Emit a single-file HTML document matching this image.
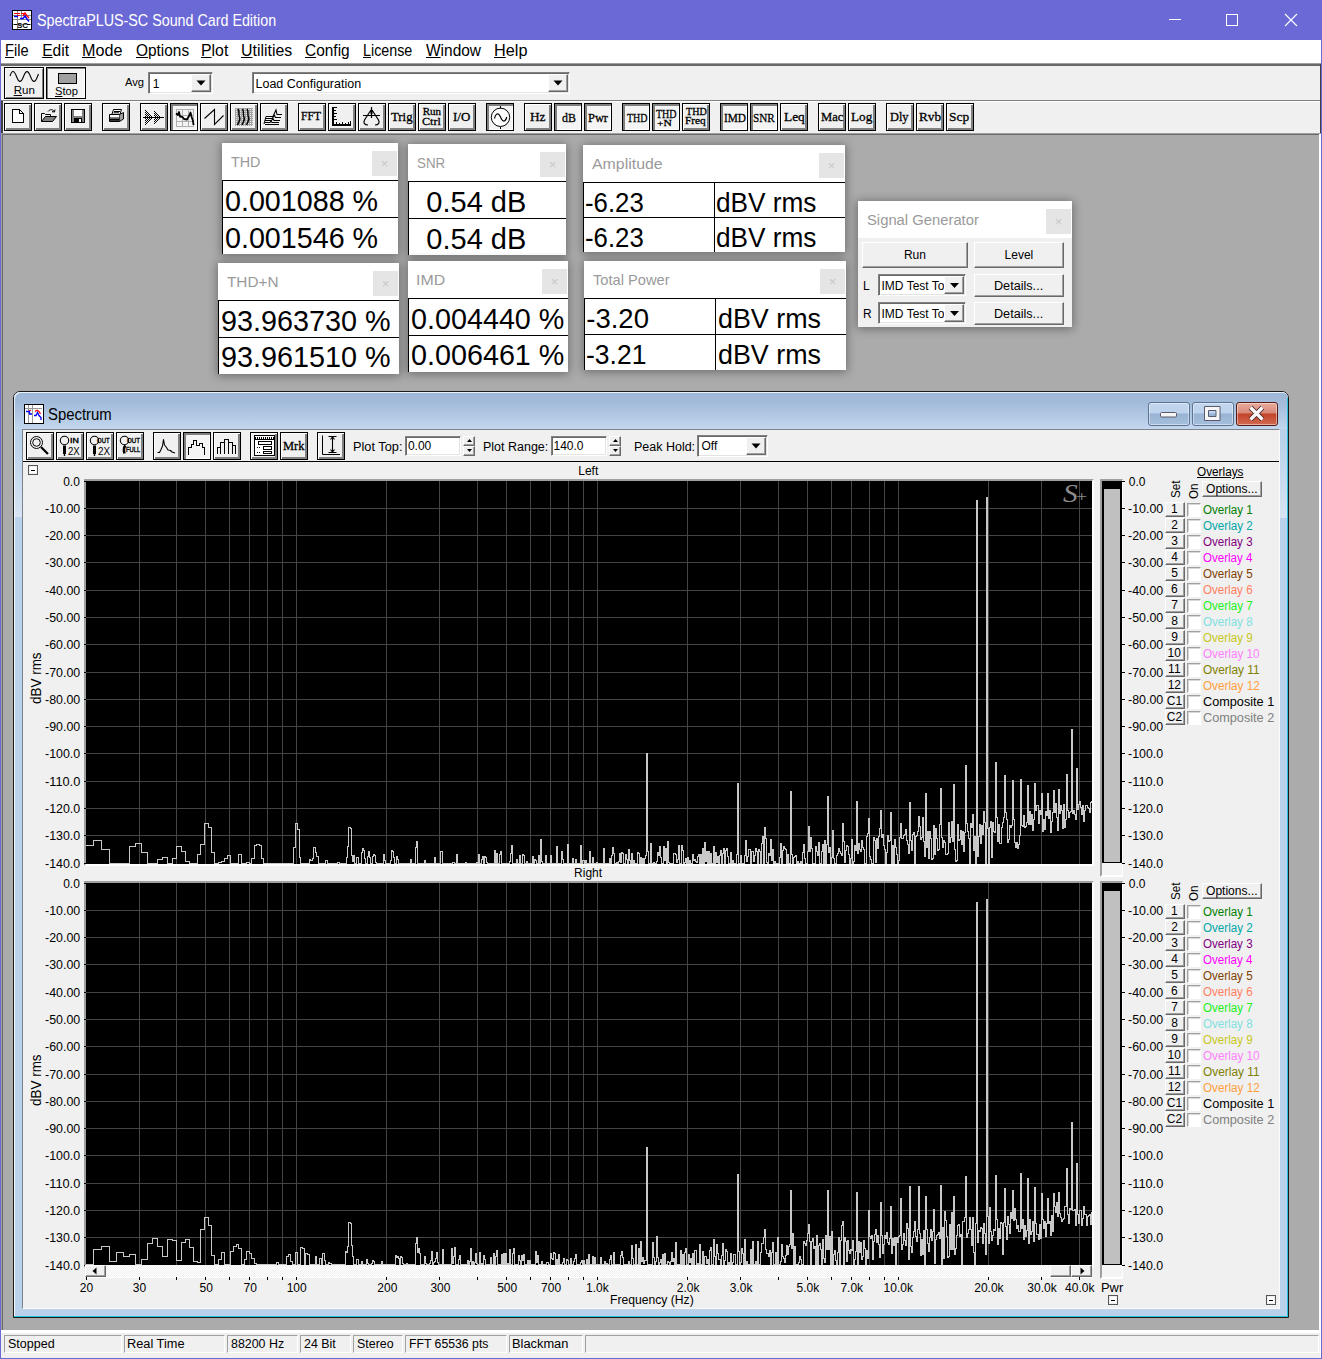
<!DOCTYPE html>
<html><head><meta charset="utf-8"><title>SpectraPLUS-SC Sound Card Edition</title>
<style>
*{box-sizing:border-box;margin:0;padding:0}
html,body{width:1322px;height:1359px;overflow:hidden;background:#ababab}
body{position:relative;font-family:"Liberation Sans",sans-serif}
div,span.t,svg{position:absolute}
span.t{white-space:nowrap;transform-origin:0 0;display:block}
u{text-decoration:underline;text-underline-offset:1px}
.rb{border:1px solid #000;background:#f0f0f0;box-shadow:inset 1px 1px 0 #fff,inset -2px -2px 0 #808080}
.pb{border:1px solid #000;background:#f4f4f4;box-shadow:inset 2px 2px 0 #808080,inset -1px -1px 0 #fff}
.rb2{border:1px solid #000;background:#f0f0f0;box-shadow:inset 1px 1px 0 #fff,inset -1px -1px 0 #808080}
.pb2{border:1px solid #000;background:#f4f4f4;box-shadow:inset 1px 1px 0 #808080,inset -1px -1px 0 #fff}
.sunk{background:#fff;border:1px solid;border-color:#808080 #fff #fff #808080;box-shadow:inset 1px 1px 0 #696969,inset -1px -1px 0 #e3e3e3}
.chk{background:#fff;border:1px solid;border-color:#a0a0a0 #fff #fff #a0a0a0;box-shadow:inset 1px 1px 0 #d8d8d8}
.btn{background:#f0f0f0;border:1px solid;border-color:#fff #696969 #696969 #fff;box-shadow:inset -1px -1px 0 #a0a0a0,inset 1px 1px 0 #f0f0f0}
.pane{border:1px solid;border-color:#a0a0a0 #fff #fff #a0a0a0}
.panel{background:#fff;box-shadow:0 1px 9px 1px rgba(0,0,0,.36)}
.cx{background:#e5e5e5}
</style></head>
<body>
<div style="left:0px;top:0px;width:1322px;height:1359px;background:#6b69d6"></div>
<div style="left:1px;top:40px;width:1320px;height:23px;background:#fff"></div>
<div style="left:1px;top:63px;width:1320px;height:70px;background:#f0f0f0"></div>
<div style="left:1px;top:63px;width:1320px;height:1px;background:#a0a0a0"></div>
<div style="left:1px;top:64px;width:1320px;height:2px;background:#696969"></div>
<div style="left:1px;top:100px;width:1320px;height:1px;background:#808080"></div>
<div style="left:1px;top:101px;width:1320px;height:1px;background:#fff"></div>
<div style="left:1320px;top:64px;width:1px;height:70px;background:#404040"></div>
<div style="left:1px;top:101px;width:2px;height:32px;background:#404040"></div>
<div style="left:1px;top:133px;width:1320px;height:1197px;background:#ababab;border:solid;border-width:1px 2px 0 1px;border-color:#a0a0a0 #fff #fff #a0a0a0;box-shadow:inset 1px 1px 0 #696969"></div>
<div style="left:1px;top:133px;width:1320px;height:1px;background:#a0a0a0"></div>
<div style="left:1px;top:1330px;width:1320px;height:28px;background:#f0f0f0;border-top:3px solid #fff;border-right:1px solid #fff"></div>
<div style="left:0px;top:1358px;width:1322px;height:1px;background:#6b69d6"></div>
<div class="pane" style="left:4px;top:1335px;width:118px;height:18px;"></div>
<span class="t" style="left:7.84px;top:1338px;font-size:12px;line-height:12px;color:#000;transform:scaleX(1.0428);">Stopped</span>
<div class="pane" style="left:124px;top:1335px;width:101px;height:18px;"></div>
<span class="t" style="left:127.18px;top:1338px;font-size:12px;line-height:12px;color:#000;transform:scaleX(1.0654);">Real Time</span>
<div class="pane" style="left:227px;top:1335px;width:71px;height:18px;"></div>
<span class="t" style="left:231.00px;top:1338px;font-size:12px;line-height:12px;color:#000;transform:scaleX(1.0342);">88200 Hz</span>
<div class="pane" style="left:300px;top:1335px;width:51px;height:18px;"></div>
<span class="t" style="left:303.88px;top:1338px;font-size:12px;line-height:12px;color:#000;transform:scaleX(1.0333);">24 Bit</span>
<div class="pane" style="left:353px;top:1335px;width:50px;height:18px;"></div>
<span class="t" style="left:356.84px;top:1338px;font-size:12px;line-height:12px;color:#000;transform:scaleX(1.0344);">Stereo</span>
<div class="pane" style="left:405px;top:1335px;width:102px;height:18px;"></div>
<span class="t" style="left:409.42px;top:1338px;font-size:12px;line-height:12px;color:#000;transform:scaleX(1.0204);">FFT 65536 pts</span>
<div class="pane" style="left:509px;top:1335px;width:74px;height:18px;"></div>
<span class="t" style="left:512.17px;top:1338px;font-size:12px;line-height:12px;color:#000;transform:scaleX(1.0699);">Blackman</span>
<div class="pane" style="left:585px;top:1335px;width:734px;height:18px;"></div>
<span class="t" style="left:36.96px;top:13px;font-size:16px;line-height:16px;color:#fff;transform:scaleX(0.8931);">SpectraPLUS-SC Sound Card Edition</span>
<svg style="left:12px;top:10px" width="20" height="20" viewBox="0 0 20 20" shape-rendering="crispEdges"><rect x="0.5" y="0.5" width="19" height="19" fill="#fff" stroke="#000"/><path d="M1 5.5H19M1 9.5H19M1 14.5H19M5.5 1V19M9.5 1V10" stroke="#888" fill="none"/><path d="M2 3.5H8M5 5.5H8M9 3.5H12" stroke="#f00" stroke-width="1.6" fill="none"/><path d="M11 6L13 3L15 6L17 8" stroke="#f00" stroke-width="1.4" fill="none" shape-rendering="auto"/><path d="M2 6.5H6M8 8.5H11L13 6L15 9L17 11.5" stroke="#00f" stroke-width="1.4" fill="none" shape-rendering="auto"/><text x="5" y="17.5" font-family="Liberation Sans,sans-serif" font-size="8" font-weight="bold" fill="#000" textLength="11">SC</text><path d="M2 14.5H5M15 14.5H18" stroke="#000" fill="none"/></svg>
<svg style="left:1160px;top:8px" width="150" height="26" viewBox="0 0 150 26" fill="none" stroke="#fff" stroke-width="1.1"><path d="M9 11.5H21" shape-rendering="crispEdges"/><rect x="66.5" y="6.5" width="11" height="11" shape-rendering="crispEdges"/><path d="M125 6L137 18M137 6L125 18"/></svg>
<span class="t" style="left:5.23px;top:43px;font-size:15.6px;line-height:15.6px;color:#000;transform:scaleX(0.9379);"><u>F</u>ile</span>
<span class="t" style="left:42.15px;top:43px;font-size:15.6px;line-height:15.6px;color:#000;"><u>E</u>dit</span>
<span class="t" style="left:82.01px;top:43px;font-size:15.6px;line-height:15.6px;color:#000;transform:scaleX(1.0370);"><u>M</u>ode</span>
<span class="t" style="left:135.51px;top:43px;font-size:15.6px;line-height:15.6px;color:#000;transform:scaleX(0.9887);"><u>O</u>ptions</span>
<span class="t" style="left:201.03px;top:43px;font-size:15.6px;line-height:15.6px;color:#000;transform:scaleX(1.0154);"><u>P</u>lot</span>
<span class="t" style="left:241.01px;top:43px;font-size:15.6px;line-height:15.6px;color:#000;transform:scaleX(1.0186);"><u>U</u>tilities</span>
<span class="t" style="left:305.23px;top:43px;font-size:15.6px;line-height:15.6px;color:#000;transform:scaleX(0.9915);"><u>C</u>onfig</span>
<span class="t" style="left:362.86px;top:43px;font-size:15.6px;line-height:15.6px;color:#000;transform:scaleX(0.9158);"><u>L</u>icense</span>
<span class="t" style="left:425.92px;top:43px;font-size:15.6px;line-height:15.6px;color:#000;transform:scaleX(0.9917);"><u>W</u>indow</span>
<span class="t" style="left:493.70px;top:43px;font-size:15.6px;line-height:15.6px;color:#000;transform:scaleX(1.0435);"><u>H</u>elp</span>
<div class="rb2" style="left:4px;top:67px;width:40px;height:32px;"></div>
<svg style="left:4px;top:67px" width="40" height="33" viewBox="0 0 40 33" fill="none" stroke="#000" stroke-width="1.1"><path d="M6 9C8 3 10 3 12.5 9.5S17 16 19.5 9.5S24 3 26.500 9.5S31 16 33.500 9.5L34.500 7"/></svg>
<span class="t" style="left:13.68px;top:85px;font-size:11.5px;line-height:11.5px;color:#000;"><u>R</u>un</span>
<div class="pb2" style="left:46px;top:67px;width:40px;height:32px;"></div>
<div style="left:58px;top:73px;width:19px;height:11px;background:#a0a0a0;border:1px solid #000"></div>
<span class="t" style="left:54.80px;top:86px;font-size:11.5px;line-height:11.5px;color:#000;transform:scaleX(0.9711);"><u>S</u>top</span>
<span class="t" style="left:125.00px;top:77px;font-size:11.5px;line-height:11.5px;color:#000;transform:scaleX(0.9726);">Avg</span>
<div class="sunk" style="left:148px;top:72px;width:65px;height:22px;"></div>
<div class="btn" style="left:191px;top:74px;width:20px;height:18px;"></div>
<svg style="left:196.0px;top:80.0px" width="10" height="6" viewBox="0 0 10 6"><path d="M0.5 0.5H9.5L5 5.5Z" fill="#000"/></svg>
<span class="t" style="left:152.70px;top:78px;font-size:12px;line-height:12px;color:#000;">1</span>
<div class="sunk" style="left:252px;top:72px;width:318px;height:22px;"></div>
<div class="btn" style="left:548px;top:74px;width:20px;height:18px;"></div>
<svg style="left:553.0px;top:80.0px" width="10" height="6" viewBox="0 0 10 6"><path d="M0.5 0.5H9.5L5 5.5Z" fill="#000"/></svg>
<span class="t" style="left:255.50px;top:78px;font-size:12.5px;line-height:12.5px;color:#000;">Load Configuration</span>
<div class="rb" style="left:4px;top:103px;width:28px;height:28px;"></div>
<div class="rb" style="left:34px;top:103px;width:28px;height:28px;"></div>
<div class="rb" style="left:64px;top:103px;width:28px;height:28px;"></div>
<div class="rb" style="left:102px;top:103px;width:28px;height:28px;"></div>
<div class="rb" style="left:140px;top:103px;width:28px;height:28px;"></div>
<div class="rb" style="left:200px;top:103px;width:28px;height:28px;"></div>
<div class="rb" style="left:230px;top:103px;width:28px;height:28px;"></div>
<div class="rb" style="left:260px;top:103px;width:28px;height:28px;"></div>
<div class="rb" style="left:298px;top:103px;width:28px;height:28px;"></div>
<div class="rb" style="left:328px;top:103px;width:28px;height:28px;"></div>
<div class="rb" style="left:358px;top:103px;width:28px;height:28px;"></div>
<div class="rb" style="left:388px;top:103px;width:28px;height:28px;"></div>
<div class="rb" style="left:418px;top:103px;width:28px;height:28px;"></div>
<div class="rb" style="left:448px;top:103px;width:28px;height:28px;"></div>
<div class="rb" style="left:524px;top:103px;width:28px;height:28px;"></div>
<div class="rb" style="left:682px;top:103px;width:28px;height:28px;"></div>
<div class="rb" style="left:780px;top:103px;width:28px;height:28px;"></div>
<div class="rb" style="left:818px;top:103px;width:28px;height:28px;"></div>
<div class="rb" style="left:848px;top:103px;width:28px;height:28px;"></div>
<div class="rb" style="left:886px;top:103px;width:28px;height:28px;"></div>
<div class="rb" style="left:916px;top:103px;width:28px;height:28px;"></div>
<div class="rb" style="left:946px;top:103px;width:28px;height:28px;"></div>
<div class="pb" style="left:170px;top:103px;width:28px;height:28px;"></div>
<div class="pb" style="left:486px;top:103px;width:28px;height:28px;"></div>
<div class="pb" style="left:554px;top:103px;width:28px;height:28px;"></div>
<div class="pb" style="left:584px;top:103px;width:28px;height:28px;"></div>
<div class="pb" style="left:622px;top:103px;width:28px;height:28px;"></div>
<div class="pb" style="left:652px;top:103px;width:28px;height:28px;"></div>
<div class="pb" style="left:720px;top:103px;width:28px;height:28px;"></div>
<div class="pb" style="left:750px;top:103px;width:28px;height:28px;"></div>
<svg style="left:4px;top:103px" width="28" height="28" viewBox="0 0 28 28" fill="none" stroke="#000" stroke-width="1" shape-rendering="crispEdges"><path d="M8.5 6.5H15.5L19.5 10.5V19.5H8.5Z" fill="#fff"/><path d="M15.5 6.5V10.5H19.5"/></svg>
<svg style="left:34px;top:103px" width="28" height="28" viewBox="0 0 28 28" fill="none" stroke="#000" stroke-width="1" ><path d="M7.5 18.5V10.5H10.5L11.5 11.5H16.5V13.5" /><path d="M7.5 18.5L11.5 13.5H22.5L18.5 18.5Z" fill="#808080"/><path d="M14 8.5C16 6 19 6 20.5 9M20.5 9L21 6.5M20.5 9L18 8.7"/></svg>
<svg style="left:64px;top:103px" width="28" height="28" viewBox="0 0 28 28" fill="none" stroke="#000" stroke-width="1" shape-rendering="crispEdges"><rect x="7.5" y="6.5" width="13" height="13" fill="#808080"/><rect x="9.5" y="6.5" width="8" height="6" fill="#fff" stroke="none"/><rect x="10" y="15" width="8" height="4.5" fill="#000" stroke="none"/><rect x="15" y="16" width="2" height="3" fill="#fff" stroke="none"/></svg>
<svg style="left:102px;top:103px" width="28" height="28" viewBox="0 0 28 28" fill="none" stroke="#000" stroke-width="1" ><path d="M10 11L11.5 6.5H19.5L18 11" fill="#fff"/><path d="M7.5 11.5H17.5V18.5H7.5Z" fill="#fff"/><path d="M17.5 11.5L21.5 9.5V16L17.5 18.5" fill="#a0a0a0"/><path d="M7.5 15H17.5M12 8.5H18M11.5 9.8H17"/><path d="M7.5 16.8H17.5" stroke-width="2"/></svg>
<svg style="left:140px;top:103px" width="28" height="28" viewBox="0 0 28 28" fill="none" stroke="#000" stroke-width="1" shape-rendering="crispEdges"><path d="M5 7.5h1M6 8.5h1M5 9.5h1M7 9.5h1M6 10.5h1M8 10.5h1M5 11.5h1M7 11.5h1M9 11.5h1M6 12.5h1M8 12.5h1M10 12.5h1M5 13.5h1M7 13.5h1M9 13.5h1M11 13.5h1M6 14.5h1M8 14.5h1M10 14.5h1M12 14.5h1M5 15.5h1M7 15.5h1M9 15.5h1M11 15.5h1M6 16.5h1M8 16.5h1M10 16.5h1M5 17.5h1M7 17.5h1M9 17.5h1M6 18.5h1M8 18.5h1M5 19.5h1M7 19.5h1M6 20.5h1M5 21.5h1M14 8.5h1M15 9.5h1M14 10.5h1M16 10.5h1M15 11.5h1M17 11.5h1M14 12.5h1M16 12.5h1M18 12.5h1M15 13.5h1M17 13.5h1M19 13.5h1M14 14.5h1M16 14.5h1M18 14.5h1M20 14.5h1M15 15.5h1M17 15.5h1M19 15.5h1M14 16.5h1M16 16.5h1M18 16.5h1M15 17.5h1M17 17.5h1M14 18.5h1M16 18.5h1M15 19.5h1M14 20.5h1"/><path d="M3 14.5H24"/></svg>
<svg style="left:170px;top:103px" width="28" height="28" viewBox="0 0 28 28" fill="none" stroke="#000" stroke-width="1" ><g shape-rendering="crispEdges" stroke="#b0b0b0"><rect x="6.5" y="6.5" width="17" height="17"/><path d="M12.5 6.5V23.5M18.5 6.5V23.5M6.5 12.5H23.5M6.5 18.5H23.5"/></g><path d="M6 10.5L8 12L9 9L10 13.5L12.5 14L14 16L17 16.5L19 13L20.5 9.5L21.5 13.5L23 18L23.5 22" stroke-width="1.8" stroke-linejoin="round"/></svg>
<svg style="left:200px;top:103px" width="28" height="28" viewBox="0 0 28 28" fill="none" stroke="#000" stroke-width="1" ><path d="M4.5 15.5L14.5 6.5V21.5L23.5 12.5" stroke-width="1.1"/></svg>
<svg style="left:230px;top:103px" width="28" height="28" viewBox="0 0 28 28" fill="none" stroke="#000" stroke-width="1" ><rect x="5" y="5" width="18" height="18" fill="#a4a4a4" stroke="none"/><path d="M6 6.5h1M8 6.5h1M10 6.5h1M12 6.5h1M14 6.5h1M16 6.5h1M18 6.5h1M20 6.5h1M22 6.5h1M6 8.5h1M8 8.5h1M10 8.5h1M12 8.5h1M14 8.5h1M16 8.5h1M18 8.5h1M20 8.5h1M22 8.5h1M6 10.5h1M8 10.5h1M10 10.5h1M12 10.5h1M14 10.5h1M16 10.5h1M18 10.5h1M20 10.5h1M22 10.5h1M6 12.5h1M8 12.5h1M10 12.5h1M12 12.5h1M14 12.5h1M16 12.5h1M18 12.5h1M20 12.5h1M22 12.5h1M6 14.5h1M8 14.5h1M10 14.5h1M12 14.5h1M14 14.5h1M16 14.5h1M18 14.5h1M20 14.5h1M22 14.5h1M6 16.5h1M8 16.5h1M10 16.5h1M12 16.5h1M14 16.5h1M16 16.5h1M18 16.5h1M20 16.5h1M22 16.5h1M6 18.5h1M8 18.5h1M10 18.5h1M12 18.5h1M14 18.5h1M16 18.5h1M18 18.5h1M20 18.5h1M22 18.5h1M6 20.5h1M8 20.5h1M10 20.5h1M12 20.5h1M14 20.5h1M16 20.5h1M18 20.5h1M20 20.5h1M22 20.5h1M6 22.5h1M8 22.5h1M10 22.5h1M12 22.5h1M14 22.5h1M16 22.5h1M18 22.5h1M20 22.5h1M22 22.5h1" stroke="#e8e8e8" shape-rendering="crispEdges"/><path d="M8 6C10 9 8 11 9.5 14S8.5 19 7.5 22M12.5 6C14.5 9 12.5 11 14 14S13 19 12 22M17 6C19 9 17 11 18.5 14S17.5 19 16.5 22" stroke-width="1.4"/></svg>
<svg style="left:260px;top:103px" width="28" height="28" viewBox="0 0 28 28" fill="none" stroke="#000" stroke-width="1" ><path d="M6 13.5H13L16 7L17 11.5H22M5 15.5H12L14.5 12.5L15.5 14.5H21M5 17.5H11.5L13 15.5L14 17.5H20M5 19.5H10L11 18L12 19.5H19M5 21.5H19" stroke-width="1.1"/><path d="M6 13.5L4 21" /></svg>
<svg style="left:328px;top:103px" width="28" height="28" viewBox="0 0 28 28" fill="none" stroke="#000" stroke-width="1" shape-rendering="crispEdges"><path d="M5 4V22M4 22H23" stroke-width="2"/><path d="M6 4.500H9M6 7.500H8M6 10.500H9M6 13.500H8M6 16.500H9M8.500 21V19M11.500 21V20M14.500 21V19M17.500 21V20M20.500 21V19M22.500 21V18"/></svg>
<svg style="left:358px;top:103px" width="28" height="28" viewBox="0 0 28 28" fill="none" stroke="#000" stroke-width="1" ><path d="M13.500 4V15M5 12.500H22M13 7L6.500 17C5 20 6.500 22 10 22M14 7L20.500 17C22 20 20.500 22 17 22" stroke-width="1.2"/><path d="M12.500 8h2v3h-2z" fill="#000" stroke="none"/></svg>
<svg style="left:486px;top:103px" width="28" height="28" viewBox="0 0 28 28" fill="none" stroke="#000" stroke-width="1" ><circle cx="14.5" cy="14.3" r="9.2" fill="#fff"/><path d="M14.500 3V5.500M14.500 23.500V26"/><path d="M8.500 15.500C9.500 10.500 12 9.500 13.700 12.500L15.500 16C17 19 19.500 19 20.800 14" stroke-width="1.2"/></svg>
<span class="t" style="left:301.45px;top:110px;font-size:12px;line-height:12px;color:#000;font-family:'Liberation Serif',serif;transform:scaleX(0.9652);-webkit-text-stroke:0.3px #000;">FFT</span>
<span class="t" style="left:390.91px;top:110px;font-size:13px;line-height:13px;color:#000;font-family:'Liberation Serif',serif;transform:scaleX(0.9837);-webkit-text-stroke:0.3px #000;">Trig</span>
<span class="t" style="left:422.67px;top:106px;font-size:11px;line-height:11px;color:#000;font-family:'Liberation Serif',serif;-webkit-text-stroke:0.3px #000;">Run</span>
<span class="t" style="left:422.31px;top:116px;font-size:11px;line-height:11px;color:#000;font-family:'Liberation Serif',serif;transform:scaleX(1.1030);-webkit-text-stroke:0.3px #000;">Ctrl</span>
<span class="t" style="left:453.25px;top:110px;font-size:13px;line-height:13px;color:#000;font-family:'Liberation Serif',serif;transform:scaleX(0.9930);-webkit-text-stroke:0.3px #000;">I/O</span>
<span class="t" style="left:530.40px;top:110px;font-size:13px;line-height:13px;color:#000;font-family:'Liberation Serif',serif;transform:scaleX(1.0233);-webkit-text-stroke:0.3px #000;">Hz</span>
<span class="t" style="left:561.78px;top:111px;font-size:13px;line-height:13px;color:#000;font-family:'Liberation Serif',serif;transform:scaleX(0.9146);-webkit-text-stroke:0.3px #000;">dB</span>
<span class="t" style="left:587.53px;top:111px;font-size:13px;line-height:13px;color:#000;font-family:'Liberation Serif',serif;transform:scaleX(0.9524);-webkit-text-stroke:0.3px #000;">Pwr</span>
<span class="t" style="left:626.95px;top:111px;font-size:13.5px;line-height:13.5px;color:#000;font-family:'Liberation Serif',serif;transform:scaleX(0.7426);-webkit-text-stroke:0.3px #000;">THD</span>
<span class="t" style="left:655.95px;top:107px;font-size:13px;line-height:13px;color:#000;font-family:'Liberation Serif',serif;transform:scaleX(0.7711);-webkit-text-stroke:0.3px #000;">THD</span>
<span class="t" style="left:657.42px;top:119px;font-size:8.8px;line-height:8.8px;color:#000;font-family:'Liberation Serif',serif;transform:scaleX(1.3094);-webkit-text-stroke:0.3px #000;">+N</span>
<span class="t" style="left:685.55px;top:106px;font-size:11.3px;line-height:11.3px;color:#000;font-family:'Liberation Serif',serif;transform:scaleX(0.8916);-webkit-text-stroke:0.3px #000;">THD</span>
<span class="t" style="left:685.36px;top:115px;font-size:10.8px;line-height:10.8px;color:#000;font-family:'Liberation Serif',serif;transform:scaleX(1.0501);-webkit-text-stroke:0.3px #000;">Freq</span>
<span class="t" style="left:723.60px;top:111px;font-size:13.5px;line-height:13.5px;color:#000;font-family:'Liberation Serif',serif;transform:scaleX(0.8398);-webkit-text-stroke:0.3px #000;">IMD</span>
<span class="t" style="left:753.27px;top:111px;font-size:13.5px;line-height:13.5px;color:#000;font-family:'Liberation Serif',serif;transform:scaleX(0.8314);-webkit-text-stroke:0.3px #000;">SNR</span>
<span class="t" style="left:783.60px;top:110px;font-size:13px;line-height:13px;color:#000;font-family:'Liberation Serif',serif;transform:scaleX(1.0290);-webkit-text-stroke:0.3px #000;">Leq</span>
<span class="t" style="left:820.72px;top:110px;font-size:13px;line-height:13px;color:#000;font-family:'Liberation Serif',serif;transform:scaleX(0.9660);-webkit-text-stroke:0.3px #000;">Mac</span>
<span class="t" style="left:851.40px;top:110px;font-size:13px;line-height:13px;color:#000;font-family:'Liberation Serif',serif;transform:scaleX(1.0158);-webkit-text-stroke:0.3px #000;">Log</span>
<span class="t" style="left:890.13px;top:110px;font-size:13px;line-height:13px;color:#000;font-family:'Liberation Serif',serif;transform:scaleX(0.9504);-webkit-text-stroke:0.3px #000;">Dly</span>
<span class="t" style="left:918.80px;top:110px;font-size:13px;line-height:13px;color:#000;font-family:'Liberation Serif',serif;transform:scaleX(1.0192);-webkit-text-stroke:0.3px #000;">Rvb</span>
<span class="t" style="left:948.63px;top:110px;font-size:13px;line-height:13px;color:#000;font-family:'Liberation Serif',serif;transform:scaleX(1.0312);-webkit-text-stroke:0.3px #000;">Scp</span>
<div class="panel" style="left:222px;top:143px;width:176px;height:111px;"></div>
<span class="t" style="left:231.01px;top:154px;font-size:15px;line-height:15px;color:#9a9a9a;transform:scaleX(0.9548);">THD</span>
<div class="cx" style="left:372px;top:151px;width:25px;height:25px;"></div>
<span class="t" style="left:380.70px;top:157px;font-size:13px;line-height:13px;color:#c8c8c8;">×</span>
<div style="left:222px;top:180px;width:176px;height:1px;background:#000"></div>
<div style="left:222px;top:217px;width:176px;height:1px;background:#000"></div>
<div style="left:222px;top:180px;width:1px;height:74px;background:#000"></div>
<span class="t" style="left:224.85px;top:187px;font-size:29px;line-height:29px;color:#000;transform:scaleX(0.9890);">0.001088 %</span>
<span class="t" style="left:224.85px;top:224px;font-size:29px;line-height:29px;color:#000;transform:scaleX(0.9890);">0.001546 %</span>
<div class="panel" style="left:408px;top:144px;width:158px;height:111px;"></div>
<span class="t" style="left:416.90px;top:155px;font-size:15px;line-height:15px;color:#9a9a9a;transform:scaleX(0.8911);">SNR</span>
<div class="cx" style="left:540px;top:152px;width:25px;height:25px;"></div>
<span class="t" style="left:548.70px;top:158px;font-size:13px;line-height:13px;color:#c8c8c8;">×</span>
<div style="left:408px;top:181px;width:158px;height:1px;background:#000"></div>
<div style="left:408px;top:218px;width:158px;height:1px;background:#000"></div>
<div style="left:408px;top:181px;width:1px;height:74px;background:#000"></div>
<span class="t" style="left:426.34px;top:188px;font-size:29px;line-height:29px;color:#000;">0.54 dB</span>
<span class="t" style="left:426.34px;top:225px;font-size:29px;line-height:29px;color:#000;">0.54 dB</span>
<div class="panel" style="left:218px;top:263px;width:181px;height:111px;"></div>
<span class="t" style="left:227.19px;top:274px;font-size:15px;line-height:15px;color:#9a9a9a;transform:scaleX(1.0225);">THD+N</span>
<div class="cx" style="left:373px;top:271px;width:25px;height:25px;"></div>
<span class="t" style="left:381.70px;top:277px;font-size:13px;line-height:13px;color:#c8c8c8;">×</span>
<div style="left:218px;top:300px;width:181px;height:1px;background:#000"></div>
<div style="left:218px;top:337px;width:181px;height:1px;background:#000"></div>
<div style="left:218px;top:300px;width:1px;height:74px;background:#000"></div>
<span class="t" style="left:220.71px;top:307px;font-size:29px;line-height:29px;color:#000;transform:scaleX(0.9921);">93.963730 %</span>
<span class="t" style="left:220.71px;top:343px;font-size:29px;line-height:29px;color:#000;transform:scaleX(0.9921);">93.961510 %</span>
<div class="panel" style="left:408px;top:261px;width:160px;height:111px;"></div>
<span class="t" style="left:416.07px;top:272px;font-size:15px;line-height:15px;color:#9a9a9a;transform:scaleX(1.0619);">IMD</span>
<div class="cx" style="left:542px;top:269px;width:25px;height:25px;"></div>
<span class="t" style="left:550.70px;top:275px;font-size:13px;line-height:13px;color:#c8c8c8;">×</span>
<div style="left:408px;top:298px;width:160px;height:1px;background:#000"></div>
<div style="left:408px;top:335px;width:160px;height:1px;background:#000"></div>
<div style="left:408px;top:298px;width:1px;height:74px;background:#000"></div>
<span class="t" style="left:410.85px;top:305px;font-size:29px;line-height:29px;color:#000;transform:scaleX(0.9909);">0.004440 %</span>
<span class="t" style="left:410.85px;top:341px;font-size:29px;line-height:29px;color:#000;transform:scaleX(0.9909);">0.006461 %</span>
<div class="panel" style="left:583px;top:145px;width:262px;height:107px;"></div>
<span class="t" style="left:592.00px;top:156px;font-size:15px;line-height:15px;color:#9a9a9a;transform:scaleX(1.0594);">Amplitude</span>
<div class="cx" style="left:819px;top:153px;width:25px;height:25px;"></div>
<span class="t" style="left:827.70px;top:159px;font-size:13px;line-height:13px;color:#c8c8c8;">×</span>
<div style="left:583px;top:182px;width:262px;height:1px;background:#000"></div>
<div style="left:583px;top:217px;width:262px;height:1px;background:#000"></div>
<div style="left:583px;top:182px;width:1px;height:70px;background:#000"></div>
<div style="left:714px;top:182px;width:1px;height:70px;background:#000"></div>
<span class="t" style="left:585.24px;top:190px;font-size:27px;line-height:27px;color:#000;transform:scaleX(0.9550);">-6.23</span>
<span class="t" style="left:716.45px;top:190px;font-size:27px;line-height:27px;color:#000;transform:scaleX(0.9703);">dBV rms</span>
<span class="t" style="left:585.24px;top:225px;font-size:27px;line-height:27px;color:#000;transform:scaleX(0.9550);">-6.23</span>
<span class="t" style="left:716.45px;top:225px;font-size:27px;line-height:27px;color:#000;transform:scaleX(0.9703);">dBV rms</span>
<div class="panel" style="left:584px;top:261px;width:262px;height:109px;"></div>
<span class="t" style="left:593.21px;top:272px;font-size:15px;line-height:15px;color:#9a9a9a;transform:scaleX(0.9762);">Total Power</span>
<div class="cx" style="left:820px;top:269px;width:25px;height:25px;"></div>
<span class="t" style="left:828.70px;top:275px;font-size:13px;line-height:13px;color:#c8c8c8;">×</span>
<div style="left:584px;top:298px;width:262px;height:1px;background:#000"></div>
<div style="left:584px;top:334px;width:262px;height:1px;background:#000"></div>
<div style="left:584px;top:298px;width:1px;height:72px;background:#000"></div>
<div style="left:715px;top:298px;width:1px;height:72px;background:#000"></div>
<span class="t" style="left:586.26px;top:305px;font-size:27.5px;line-height:27.5px;color:#000;">-3.20</span>
<span class="t" style="left:717.53px;top:305px;font-size:27.5px;line-height:27.5px;color:#000;transform:scaleX(0.9768);">dBV rms</span>
<span class="t" style="left:586.31px;top:341px;font-size:27.5px;line-height:27.5px;color:#000;transform:scaleX(0.9631);">-3.21</span>
<span class="t" style="left:717.53px;top:341px;font-size:27.5px;line-height:27.5px;color:#000;transform:scaleX(0.9768);">dBV rms</span>
<div class="panel" style="left:858px;top:201px;width:214px;height:126px;background:#f0f0f0"></div>
<div style="left:858px;top:201px;width:214px;height:37px;background:#fff"></div>
<span class="t" style="left:866.53px;top:212px;font-size:15.5px;line-height:15.5px;color:#9a9a9a;transform:scaleX(0.9548);">Signal Generator</span>
<div class="cx" style="left:1046px;top:209px;width:25px;height:25px;"></div>
<span class="t" style="left:1054.70px;top:215px;font-size:13px;line-height:13px;color:#c8c8c8;">×</span>
<div class="btn" style="left:862px;top:242px;width:106px;height:26px;"></div>
<span class="t" style="left:903.90px;top:249px;font-size:12px;line-height:12px;color:#000;">Run</span>
<div class="btn" style="left:974px;top:242px;width:90px;height:26px;"></div>
<span class="t" style="left:1004.57px;top:249px;font-size:12px;line-height:12px;color:#000;">Level</span>
<div class="btn" style="left:974px;top:274px;width:90px;height:23px;"></div>
<span class="t" style="left:994.49px;top:280px;font-size:12px;line-height:12px;color:#000;transform:scaleX(1.0529);">Details...</span>
<div class="btn" style="left:974px;top:302px;width:90px;height:23px;"></div>
<span class="t" style="left:994.49px;top:308px;font-size:12px;line-height:12px;color:#000;transform:scaleX(1.0529);">Details...</span>
<span class="t" style="left:863.04px;top:280px;font-size:12px;line-height:12px;color:#000;">L</span>
<span class="t" style="left:863.04px;top:308px;font-size:12px;line-height:12px;color:#000;">R</span>
<div class="sunk" style="left:878px;top:274px;width:88px;height:22px;overflow:hidden"></div>
<div style="left:880px;top:276px;width:64px;height:18px;overflow:hidden;background:#fff"><span class="t" style="left:1.52px;top:4px;font-size:12px;line-height:12px;color:#000;">IMD Test Tones</span></div>
<div class="btn" style="left:944px;top:276px;width:20px;height:18px;"></div>
<svg style="left:949.5px;top:282.5px" width="9" height="5" viewBox="0 0 9 5"><path d="M0 0H9L4.5 5Z" fill="#000"/></svg>
<div class="sunk" style="left:878px;top:302px;width:88px;height:22px;overflow:hidden"></div>
<div style="left:880px;top:304px;width:64px;height:18px;overflow:hidden;background:#fff"><span class="t" style="left:1.52px;top:4px;font-size:12px;line-height:12px;color:#000;">IMD Test Tones</span></div>
<div class="btn" style="left:944px;top:304px;width:20px;height:18px;"></div>
<svg style="left:949.5px;top:310.5px" width="9" height="5" viewBox="0 0 9 5"><path d="M0 0H9L4.5 5Z" fill="#000"/></svg>
<div style="left:13px;top:391px;width:1276px;height:927px;background:#b9d1ea;border:1px solid #1a1a1a;border-radius:7px 7px 0 0;box-shadow:inset 1px 1px 0 #f4f8fc"></div>
<div style="left:14px;top:392px;width:1274px;height:37px;border-radius:6px 6px 0 0;background:linear-gradient(#9db7d6 0%,#a3bcda 30%,#b4cbe6 70%,#c3d7ef 100%);box-shadow:inset 1px 1px 0 #e8f0f8"></div>
<div style="left:15px;top:440px;width:7px;height:90px;background:linear-gradient(#b9d1ea,#d6e4f3 85%,#b9d1ea 86%)"></div>
<div style="left:1280px;top:440px;width:7px;height:78px;background:linear-gradient(#b9d1ea,#d6e4f3 99%)"></div>
<div style="left:1287px;top:398px;width:1px;height:919px;background:#27c2e0"></div>
<div style="left:14px;top:1316px;width:1274px;height:1px;background:#27c2e0"></div>
<div style="left:22px;top:429px;width:1258px;height:880px;background:#f0f0f0;border:1px solid;border-color:#7c838c #fbfbfb #fbfbfb #7c838c"></div>
<svg style="left:24px;top:404px" width="20" height="20" viewBox="0 0 20 20" shape-rendering="crispEdges"><rect x="0.5" y="0.5" width="19" height="19" fill="#fff" stroke="#000"/><path d="M1 4.5H18M4.5 1V19M8.5 1V19" stroke="#999" fill="none"/><g shape-rendering="auto" fill="none" stroke-width="1.3"><path d="M5 7L7 6M11 7.5L13 6.2L15 7.5L16.5 10" stroke="#f00"/><path d="M2 7.5H5.5V10H8M10 11.5H12L13.5 8.5L15 11.5L17 13.5V16" stroke="#00f"/></g></svg>
<span class="t" style="left:47.63px;top:407px;font-size:16px;line-height:16px;color:#000;transform:scaleX(0.9293);">Spectrum</span>
<div style="left:1148px;top:402px;width:42px;height:24px;border-radius:3px;border:1px solid #5b7394;background:linear-gradient(#c2d6ee 0%,#bdd2ec 45%,#98b3d3 50%,#a5bedc 100%);box-shadow:inset 0 0 0 1px rgba(255,255,255,.45)"></div>
<div style="left:1192px;top:402px;width:42px;height:24px;border-radius:3px;border:1px solid #5b7394;background:linear-gradient(#c2d6ee 0%,#bdd2ec 45%,#98b3d3 50%,#a5bedc 100%);box-shadow:inset 0 0 0 1px rgba(255,255,255,.45)"></div>
<div style="left:1236px;top:402px;width:42px;height:24px;border-radius:3px;border:1px solid #5a1a14;background:linear-gradient(#e8aa9c 0%,#d98a78 45%,#c4432a 50%,#d06a52 100%);box-shadow:inset 0 0 0 1px rgba(255,255,255,.45)"></div>
<svg style="left:1148px;top:402px" width="130" height="24" viewBox="0 0 130 24"><rect x="12.5" y="10.5" width="16" height="4.5" rx="1" fill="#f6f6f6" stroke="#5a5a6e" stroke-width="1"/><path fill-rule="evenodd" d="M56.500 4.500h15.500v14h-15.500zM60.500 8.500h7.500v6h-7.500z" fill="#f6f6f6" stroke="#5a5a6e" stroke-width="1"/><path d="M102.500 5.500L114.500 17.500M114.500 5.500L102.500 17.500" stroke="#4a2020" stroke-width="5.2" fill="none"/><path d="M102.500 5.500L114.500 17.500M114.500 5.500L102.500 17.500" stroke="#f8f8f8" stroke-width="3.4" fill="none"/></svg>
<div style="left:23px;top:461px;width:1256px;height:1px;background:#000"></div>
<div class="rb" style="left:26px;top:432px;width:28px;height:28px;"></div>
<div class="rb" style="left:56px;top:432px;width:28px;height:28px;"></div>
<div class="rb" style="left:86px;top:432px;width:28px;height:28px;"></div>
<div class="rb" style="left:116px;top:432px;width:28px;height:28px;"></div>
<div class="rb" style="left:153px;top:432px;width:28px;height:28px;"></div>
<div class="rb" style="left:213px;top:432px;width:28px;height:28px;"></div>
<div class="rb" style="left:250px;top:432px;width:28px;height:28px;"></div>
<div class="rb" style="left:280px;top:432px;width:28px;height:28px;"></div>
<div class="rb" style="left:317px;top:432px;width:28px;height:28px;"></div>
<div class="pb" style="left:183px;top:432px;width:28px;height:28px;"></div>
<svg style="left:26px;top:432px" width="28" height="28" viewBox="0 0 28 28" fill="none" stroke="#000" stroke-width="1" ><circle cx="10.5" cy="10.5" r="6"/><circle cx="10.5" cy="10.5" r="3.8"/><path d="M15 15L22 22" stroke-width="2.2"/></svg>
<svg style="left:56px;top:432px" width="28" height="28" viewBox="0 0 28 28" fill="none" stroke="#000" stroke-width="1" ><circle cx="8.5" cy="8.5" r="4.2" stroke-width="1.1"/><path d="M8.500 13.500V22" stroke-width="3"/><path d="M8.500 22V24" stroke-width="1.4"/></svg>
<span class="t" style="left:69.91px;top:437px;font-size:7px;line-height:7px;color:#000;transform:scaleX(1.2565);-webkit-text-stroke:0.35px #000;">IN</span>
<span class="t" style="left:67.52px;top:446px;font-size:11.5px;line-height:11.5px;color:#000;transform:scaleX(0.8318);">2X</span>
<svg style="left:86px;top:432px" width="28" height="28" viewBox="0 0 28 28" fill="none" stroke="#000" stroke-width="1" ><circle cx="8.5" cy="8.5" r="4.2" stroke-width="1.1"/><path d="M8.500 13.500V22" stroke-width="3"/><path d="M8.500 22V24" stroke-width="1.4"/></svg>
<span class="t" style="left:97.23px;top:437px;font-size:7px;line-height:7px;color:#000;transform:scaleX(0.8523);-webkit-text-stroke:0.35px #000;">OUT</span>
<span class="t" style="left:97.51px;top:446px;font-size:11.5px;line-height:11.5px;color:#000;transform:scaleX(0.8544);">2X</span>
<svg style="left:116px;top:432px" width="28" height="28" viewBox="0 0 28 28" fill="none" stroke="#000" stroke-width="1" ><circle cx="8.5" cy="8.5" r="4.2" stroke-width="1.1"/><path d="M9.5 13.5C7.5 15.5 7.5 18 8.5 21.5" stroke-width="2.6"/></svg>
<span class="t" style="left:127.12px;top:437px;font-size:7px;line-height:7px;color:#000;transform:scaleX(0.8802);-webkit-text-stroke:0.35px #000;">OUT</span>
<span class="t" style="left:126.13px;top:447px;font-size:6.8px;line-height:6.8px;color:#000;transform:scaleX(0.8565);-webkit-text-stroke:0.35px #000;">FULL</span>
<svg style="left:153px;top:432px" width="28" height="28" viewBox="0 0 28 28" fill="none" stroke="#000" stroke-width="1" ><path d="M4.500 20.500H6.500L8 17.500L9.500 14L10.500 7.500L11.500 13L13.500 15.500L15 18L17.500 18.500L19 20L22 21" stroke-linejoin="round" stroke-width="1.1"/></svg>
<svg style="left:183px;top:432px" width="28" height="28" viewBox="0 0 28 28" fill="none" stroke="#000" stroke-width="1" shape-rendering="crispEdges"><path d="M5.500 23V15.500H8.500V12.500H10.500V8.500H13.500V13.500H16.500V11.500H19.500V15.500H21.500V23" stroke-width="1.2"/></svg>
<svg style="left:213px;top:432px" width="28" height="28" viewBox="0 0 28 28" fill="none" stroke="#000" stroke-width="1" shape-rendering="crispEdges"><path d="M4.500 22V15.500H7.500V22M7.500 15.500V10.500H11.500V22M11.500 10.500V7.500H15.500V22M15.500 10.500H19.500V22M19.500 13.500H22.500V22"/></svg>
<svg style="left:250px;top:432px" width="28" height="28" viewBox="0 0 28 28" fill="none" stroke="#000" stroke-width="1" shape-rendering="crispEdges"><rect x="4.500" y="3.500" width="20" height="20" fill="#fff"/><path d="M5 5.500H24" stroke-width="2" stroke-dasharray="1 1"/><path d="M5 7.500H24"/><rect x="8.500" y="9.500" width="13" height="2.500"/><rect x="13.500" y="14.500" width="8" height="2.500"/><rect x="13.500" y="19" width="8" height="2.500"/><path d="M7 15.500H11M7 20.500H11" stroke-dasharray="1 1"/></svg>
<span class="t" style="left:282.93px;top:439px;font-size:13px;line-height:13px;color:#000;font-family:'Liberation Serif',serif;transform:scaleX(0.9558);-webkit-text-stroke:0.3px #000;">Mrk</span>
<svg style="left:317px;top:432px" width="28" height="28" viewBox="0 0 28 28" fill="none" stroke="#000" stroke-width="1" ><path d="M5.500 3.500V22.500H23"/><path d="M11.500 4.500H19.500M11.500 20.500H19.500M15.500 5V20M13.500 7.500L15.500 5L17.500 7.500M13.500 17.500L15.500 20L17.500 17.500" stroke-width="1.1"/></svg>
<span class="t" style="left:353.28px;top:441px;font-size:12px;line-height:12px;color:#000;transform:scaleX(1.0639);">Plot Top:</span>
<span class="t" style="left:483.30px;top:441px;font-size:12px;line-height:12px;color:#000;transform:scaleX(1.0408);">Plot Range:</span>
<span class="t" style="left:633.50px;top:441px;font-size:12px;line-height:12px;color:#000;transform:scaleX(1.0406);">Peak Hold:</span>
<div class="sunk" style="left:405px;top:436px;width:56px;height:20px;"></div>
<span class="t" style="left:407.92px;top:440px;font-size:12px;line-height:12px;color:#000;">0.00</span>
<div class="btn" style="left:463px;top:436px;width:12px;height:10.0px;"></div>
<div class="btn" style="left:463px;top:446.0px;width:12px;height:10.0px;"></div>
<svg style="left:466.5px;top:439px" width="5" height="3" viewBox="0 0 5 3"><path d="M0 3L2.5 0L5 3Z" fill="#000"/></svg>
<svg style="left:466.5px;top:449.0px" width="5" height="3" viewBox="0 0 5 3"><path d="M0 0L2.5 3L5 0Z" fill="#000"/></svg>
<div class="sunk" style="left:551px;top:436px;width:56px;height:20px;"></div>
<span class="t" style="left:553.50px;top:440px;font-size:12px;line-height:12px;color:#000;">140.0</span>
<div class="btn" style="left:609px;top:436px;width:12px;height:10.0px;"></div>
<div class="btn" style="left:609px;top:446.0px;width:12px;height:10.0px;"></div>
<svg style="left:612.5px;top:439px" width="5" height="3" viewBox="0 0 5 3"><path d="M0 3L2.5 0L5 3Z" fill="#000"/></svg>
<svg style="left:612.5px;top:449.0px" width="5" height="3" viewBox="0 0 5 3"><path d="M0 0L2.5 3L5 0Z" fill="#000"/></svg>
<div class="sunk" style="left:697px;top:435px;width:71px;height:22px;"></div>
<div class="btn" style="left:746px;top:437px;width:20px;height:18px;"></div>
<svg style="left:751.0px;top:443.0px" width="10" height="6" viewBox="0 0 10 6"><path d="M0.5 0.5H9.5L5 5.5Z" fill="#000"/></svg>
<span class="t" style="left:701.46px;top:440px;font-size:12px;line-height:12px;color:#000;">Off</span>
<div style="left:28px;top:465px;width:10px;height:10px;background:#fff;border:1px solid #555;box-shadow:inset 0 0 0 1px #f0f0f0"></div>
<div style="left:31px;top:470px;width:4px;height:1px;background:#000"></div>
<div style="left:1108px;top:1295px;width:10px;height:10px;background:#fff;border:1px solid #555;box-shadow:inset 0 0 0 1px #f0f0f0"></div>
<div style="left:1111px;top:1300px;width:4px;height:1px;background:#000"></div>
<div style="left:1266px;top:1295px;width:10px;height:10px;background:#fff;border:1px solid #555;box-shadow:inset 0 0 0 1px #f0f0f0"></div>
<div style="left:1269px;top:1300px;width:4px;height:1px;background:#000"></div>
<div style="left:84px;top:479px;width:1010px;height:387px;background:#000;border:solid;border-width:2px 2px 2px 2px;border-color:#a0a0a0 #fff #fff #a0a0a0"></div>
<svg style="left:86px;top:481px" width="1006" height="383" viewBox="86 0 1006 383" shape-rendering="crispEdges" fill="none"><path d="M139.5 0V383M176.5 0V383M205.5 0V383M229.5 0V383M249.5 0V383M267.5 0V383M282.5 0V383M296.5 0V383M386.5 0V383M439.5 0V383M477.5 0V383M506.5 0V383M530.5 0V383M550.5 0V383M568.5 0V383M583.5 0V383M597.5 0V383M687.5 0V383M740.5 0V383M778.5 0V383M807.5 0V383M831.5 0V383M851.5 0V383M869.5 0V383M884.5 0V383M898.5 0V383M988.5 0V383M1041.5 0V383M1079.5 0V383M86 27.5H1092M86 54.5H1092M86 81.5H1092M86 109.5H1092M86 136.5H1092M86 163.5H1092M86 191.5H1092M86 218.5H1092M86 245.5H1092M86 272.5H1092M86 300.5H1092M86 327.5H1092M86 354.5H1092" stroke="#444"/><path d="M86.5 364.5H93.5V359.5H101.5V368.5H109.5V382.5H129.5V365.5H135.5V362.5H141.5V371.5H147.5V382.5H157.5V378.5H162.5V376.5H167.5V382.5H172.5V377.5H176.5V365.5H181.5V370.5H185.5V380.5H189.5V382.5H197.5V373.5H200.5V363.5H204.5V342.5H208.5V346.5H211.5V371.5H214.5V382.5H218.5V381.5H221.5V380.5H224.5V377.5H227.5V374.5H230.5V382.5H238.5V373.5H241.5V382.5H246.5V381.5H249.5V382.5H251.5V377.5H254.5V364.5H256.5V363.5H259.5V364.5H261.5V377.5H263.5V382.5H293.5V366.5H295.5V342.5H297.5V348.5H299.5V376.5H300.5V382.5H309.5V378.5H310.5V379.5H312.5V377.5H313.5V366.5H315.5V371.5H316.5V375.5H318.5V382.5H325.5V379.5H327.5V382.5H337.5V381.5H339.5V382.5H346.5V376.5H347.5V365.5H348.5V346.5H350.5V347.5H351.5V374.5H352.5V380.5H353.5V374.5H354.5V382.5H356.5V376.5H358.5V382.5H361.5V371.5H362.5V367.5H363.5V369.5H364.5V377.5H365.5V382.5H367.5V375.5H368.5V370.5H369.5V376.5H370.5V382.5H372.5V375.5H373.5V373.5H374.5V374.5H375.5V381.5H376.5V382.5H383.5V373.5H384.5V379.5H385.5V382.5H390.5V379.5H391.5V369.5H392.5V370.5H393.5V376.5H394.5V382.5H396.5V375.5H397.5V378.5H398.5V382.5H410.5V378.5H411.5V382.5H415.5V366.5H416.5V360.5H417.5V382.5H424.5V379.5H425.5V382.5H434.5V376.5H435.5V382.5H440.5V370.5H442.5V382.5H452.5V381.5H454.5V382.5H456.5V373.5H457.5V382.5H465.5V381.5H466.5V382.5H476.5V381.5H477.5V382.5H478.5V373.5H479.5V382.5H481.5V378.5H482.5V375.5H483.5V382.5H484.5V375.5H485.5V376.5H486.5V381.5H487.5V382.5H494.5V369.5H495.5V382.5H496.5V372.5H497.5V382.5H499.5V373.5H500.5V370.5H501.5V382.5H509.5V380.5H510.5V372.5H511.5V364.5H512.5V382.5H516.5V378.5H517.5V382.5H519.5V374.5H520.5V382.5H522.5V373.5H523.5V374.5H524.5V382.5H526.5V380.5H527.5V382.5H532.5V375.5H533.5V382.5H534.5V378.5H535.5V379.5H536.5V382.5H538.5V374.5H539.5V382.5H540.5V358.5H541.5V380.5H542.5V382.5H545.5V374.5H546.5V382.5H550.5V374.5H551.5V382.5H556.5V365.5H557.5V382.5H561.5V370.5H562.5V378.5H563.5V382.5H567.5V363.5H568.5V382.5H572.5V377.5H573.5V382.5H575.5V378.5H576.5V382.5H580.5V364.5H581.5V382.5H582.5V379.5H584.5V382.5H585.5V379.5H586.5V382.5H589.5V370.5H590.5V382.5H592.5V376.5H593.5V382.5H596.5V381.5H597.5V382.5H603.5V367.5H604.5V382.5H609.5V377.5H610.5V382.5H611.5V374.5H612.5V366.5H613.5V372.5H614.5V382.5H616.5V381.5H617.5V382.5H618.5V380.5H619.5V372.5H620.5V381.5H621.5V371.5H622.5V372.5H623.5V382.5H625.5V373.5H626.5V378.5H627.5V382.5H628.5V368.5H629.5V379.5H630.5V382.5H631.5V372.5H632.5V382.5H633.5V379.5H634.5V382.5H637.5V371.5H638.5V372.5H639.5V382.5H640.5V376.5H641.5V382.5H642.5V377.5H643.5V382.5H644.5V377.5H645.5V374.5H646.5V272.5H647.5V370.5H648.5V382.5H650.5V362.5H651.5V382.5H653.5V381.5H654.5V382.5H656.5V380.5H657.5V371.5H658.5V374.5H659.5V365.5H660.5V376.5H661.5V382.5H663.5V365.5H664.5V379.5H665.5V367.5H666.5V382.5H667.5V360.5H668.5V381.5H669.5V382.5H673.5V372.5H675.5V373.5H676.5V381.5H677.5V378.5H678.5V364.5H679.5V382.5H681.5V364.5H682.5V369.5H683.5V382.5H684.5V381.5H685.5V377.5H686.5V382.5H687.5V376.5H688.5V382.5H689.5V379.5H690.5V382.5H692.5V373.5H693.5V379.5H694.5V378.5H695.5V380.5H696.5V381.5H697.5V375.5H698.5V373.5H699.5V382.5H700.5V373.5H701.5V382.5H702.5V367.5H703.5V382.5H704.5V361.5H705.5V380.5H706.5V370.5H707.5V382.5H708.5V370.5H709.5V382.5H710.5V372.5H711.5V382.5H713.5V365.5H714.5V382.5H715.5V371.5H716.5V381.5H717.5V375.5H718.5V382.5H719.5V374.5H720.5V369.5H721.5V382.5H722.5V372.5H723.5V367.5H724.5V382.5H725.5V369.5H726.5V367.5H727.5V375.5H728.5V382.5H730.5V371.5H731.5V382.5H732.5V379.5H733.5V382.5H736.5V373.5H737.5V302.5H738.5V382.5H740.5V374.5H741.5V382.5H744.5V374.5H745.5V359.5H746.5V380.5H747.5V375.5H748.5V368.5H750.5V382.5H751.5V370.5H753.5V380.5H754.5V374.5H755.5V367.5H756.5V370.5H757.5V382.5H758.5V368.5H759.5V370.5H760.5V382.5H761.5V362.5H762.5V355.5H763.5V382.5H764.5V346.5H765.5V357.5H766.5V381.5H767.5V382.5H768.5V372.5H769.5V374.5H770.5V358.5H771.5V379.5H772.5V368.5H773.5V382.5H774.5V380.5H775.5V382.5H779.5V376.5H780.5V362.5H781.5V382.5H782.5V369.5H783.5V365.5H784.5V367.5H785.5V368.5H786.5V382.5H787.5V373.5H788.5V382.5H790.5V310.5H791.5V373.5H792.5V382.5H793.5V376.5H794.5V375.5H795.5V374.5H796.5V382.5H797.5V380.5H798.5V382.5H800.5V380.5H801.5V382.5H802.5V371.5H803.5V363.5H804.5V377.5H805.5V382.5H807.5V370.5H808.5V345.5H809.5V370.5H810.5V356.5H811.5V367.5H812.5V382.5H815.5V365.5H816.5V370.5H817.5V374.5H818.5V361.5H819.5V382.5H821.5V370.5H822.5V363.5H823.5V382.5H824.5V359.5H825.5V382.5H826.5V363.5H827.5V315.5H828.5V371.5H829.5V366.5H830.5V382.5H831.5V376.5H832.5V349.5H833.5V377.5H834.5V382.5H836.5V374.5H837.5V372.5H838.5V367.5H839.5V370.5H840.5V372.5H841.5V374.5H842.5V342.5H843.5V360.5H844.5V381.5H845.5V369.5H846.5V364.5H847.5V365.5H848.5V373.5H849.5V382.5H850.5V377.5H851.5V358.5H852.5V382.5H853.5V380.5H854.5V364.5H855.5V369.5H856.5V320.5H857.5V372.5H858.5V362.5H859.5V368.5H860.5V370.5H861.5V359.5H862.5V366.5H863.5V368.5H864.5V382.5H866.5V355.5H867.5V352.5H868.5V337.5H869.5V375.5H870.5V378.5H871.5V382.5H873.5V356.5H874.5V359.5H875.5V381.5H876.5V357.5H877.5V367.5H878.5V355.5H879.5V347.5H880.5V329.5H881.5V356.5H882.5V353.5H883.5V364.5H884.5V368.5H885.5V382.5H886.5V371.5H887.5V354.5H888.5V360.5H889.5V359.5H890.5V331.5H891.5V382.5H892.5V364.5H893.5V382.5H894.5V358.5H895.5V366.5H896.5V373.5H897.5V382.5H898.5V379.5H899.5V356.5H900.5V342.5H901.5V357.5H903.5V354.5H904.5V353.5H905.5V348.5H906.5V359.5H907.5V363.5H908.5V372.5H909.5V321.5H910.5V359.5H911.5V369.5H912.5V353.5H913.5V351.5H914.5V382.5H915.5V355.5H916.5V354.5H917.5V350.5H918.5V335.5H919.5V345.5H920.5V358.5H921.5V356.5H922.5V336.5H923.5V360.5H924.5V375.5H925.5V312.5H926.5V366.5H927.5V350.5H928.5V377.5H929.5V350.5H930.5V357.5H931.5V378.5H932.5V377.5H933.5V344.5H934.5V373.5H935.5V347.5H936.5V357.5H937.5V369.5H938.5V368.5H939.5V343.5H940.5V307.5H941.5V356.5H942.5V366.5H943.5V359.5H944.5V361.5H945.5V373.5H947.5V372.5H948.5V341.5H949.5V361.5H950.5V356.5H951.5V340.5H952.5V360.5H953.5V303.5H954.5V368.5H955.5V380.5H956.5V379.5H957.5V343.5H958.5V359.5H959.5V358.5H960.5V349.5H961.5V363.5H962.5V350.5H963.5V370.5H964.5V351.5H965.5V284.5H966.5V342.5H967.5V350.5H968.5V357.5H969.5V382.5H970.5V342.5H971.5V346.5H972.5V333.5H973.5V369.5H974.5V355.5H975.5V382.5H976.5V19.5H977.5V375.5H978.5V355.5H979.5V343.5H980.5V362.5H981.5V344.5H982.5V353.5H983.5V330.5H984.5V341.5H985.5V382.5H986.5V16.5H987.5V347.5H988.5V382.5H989.5V346.5H990.5V340.5H991.5V376.5H992.5V341.5H993.5V350.5H994.5V351.5H995.5V281.5H996.5V336.5H997.5V360.5H998.5V343.5H999.5V362.5H1001.5V346.5H1002.5V341.5H1003.5V336.5H1004.5V294.5H1005.5V331.5H1006.5V338.5H1007.5V361.5H1008.5V358.5H1009.5V344.5H1010.5V346.5H1011.5V344.5H1012.5V299.5H1013.5V338.5H1014.5V361.5H1015.5V366.5H1016.5V361.5H1017.5V367.5H1018.5V363.5H1019.5V354.5H1020.5V298.5H1021.5V344.5H1022.5V345.5H1023.5V334.5H1024.5V346.5H1025.5V345.5H1026.5V341.5H1027.5V304.5H1028.5V343.5H1029.5V330.5H1030.5V343.5H1031.5V333.5H1032.5V349.5H1033.5V338.5H1034.5V302.5H1035.5V329.5H1036.5V324.5H1038.5V342.5H1039.5V329.5H1040.5V333.5H1041.5V312.5H1042.5V350.5H1043.5V338.5H1044.5V348.5H1045.5V330.5H1046.5V334.5H1047.5V312.5H1048.5V337.5H1049.5V329.5H1050.5V351.5H1051.5V340.5H1052.5V331.5H1053.5V309.5H1054.5V331.5H1055.5V322.5H1056.5V336.5H1057.5V349.5H1058.5V308.5H1059.5V332.5H1060.5V324.5H1061.5V329.5H1062.5V347.5H1063.5V323.5H1064.5V346.5H1065.5V338.5H1066.5V293.5H1067.5V329.5H1068.5V336.5H1069.5V331.5H1070.5V330.5H1071.5V248.5H1072.5V332.5H1073.5V329.5H1074.5V333.5H1075.5V338.5H1076.5V287.5H1077.5V328.5H1078.5V323.5H1079.5V320.5H1080.5V326.5H1081.5V333.5H1082.5V324.5H1083.5V340.5H1084.5V329.5H1085.5V324.5H1087.5V326.5H1088.5V327.5H1089.5V331.5H1090.5V321.5H1091.5V320.5H1091.5" stroke="#c8c8c8" stroke-width="1" stroke-linecap="square"/></svg>
<span class="t" style="left:63.14px;top:476px;font-size:12px;line-height:12px;color:#000;">0.0</span>
<span class="t" style="left:1128.82px;top:476px;font-size:12px;line-height:12px;color:#000;">0.0</span>
<div style="left:84px;top:481px;width:2px;height:1px;background:#000"></div>
<span class="t" style="left:44.64px;top:503px;font-size:12px;line-height:12px;color:#000;transform:scaleX(1.0345);">-10.00</span>
<span class="t" style="left:1127.74px;top:503px;font-size:12px;line-height:12px;color:#000;transform:scaleX(1.0345);">-10.00</span>
<div style="left:84px;top:508px;width:2px;height:1px;background:#000"></div>
<span class="t" style="left:44.64px;top:530px;font-size:12px;line-height:12px;color:#000;transform:scaleX(1.0345);">-20.00</span>
<span class="t" style="left:1127.74px;top:530px;font-size:12px;line-height:12px;color:#000;transform:scaleX(1.0345);">-20.00</span>
<div style="left:84px;top:535px;width:2px;height:1px;background:#000"></div>
<span class="t" style="left:44.64px;top:557px;font-size:12px;line-height:12px;color:#000;transform:scaleX(1.0345);">-30.00</span>
<span class="t" style="left:1127.74px;top:557px;font-size:12px;line-height:12px;color:#000;transform:scaleX(1.0345);">-30.00</span>
<div style="left:84px;top:562px;width:2px;height:1px;background:#000"></div>
<span class="t" style="left:44.64px;top:585px;font-size:12px;line-height:12px;color:#000;transform:scaleX(1.0345);">-40.00</span>
<span class="t" style="left:1127.74px;top:585px;font-size:12px;line-height:12px;color:#000;transform:scaleX(1.0345);">-40.00</span>
<div style="left:84px;top:590px;width:2px;height:1px;background:#000"></div>
<span class="t" style="left:44.64px;top:612px;font-size:12px;line-height:12px;color:#000;transform:scaleX(1.0345);">-50.00</span>
<span class="t" style="left:1127.74px;top:612px;font-size:12px;line-height:12px;color:#000;transform:scaleX(1.0345);">-50.00</span>
<div style="left:84px;top:617px;width:2px;height:1px;background:#000"></div>
<span class="t" style="left:44.64px;top:639px;font-size:12px;line-height:12px;color:#000;transform:scaleX(1.0345);">-60.00</span>
<span class="t" style="left:1127.74px;top:639px;font-size:12px;line-height:12px;color:#000;transform:scaleX(1.0345);">-60.00</span>
<div style="left:84px;top:644px;width:2px;height:1px;background:#000"></div>
<span class="t" style="left:44.64px;top:667px;font-size:12px;line-height:12px;color:#000;transform:scaleX(1.0345);">-70.00</span>
<span class="t" style="left:1127.74px;top:667px;font-size:12px;line-height:12px;color:#000;transform:scaleX(1.0345);">-70.00</span>
<div style="left:84px;top:672px;width:2px;height:1px;background:#000"></div>
<span class="t" style="left:44.64px;top:694px;font-size:12px;line-height:12px;color:#000;transform:scaleX(1.0345);">-80.00</span>
<span class="t" style="left:1127.74px;top:694px;font-size:12px;line-height:12px;color:#000;transform:scaleX(1.0345);">-80.00</span>
<div style="left:84px;top:699px;width:2px;height:1px;background:#000"></div>
<span class="t" style="left:44.64px;top:721px;font-size:12px;line-height:12px;color:#000;transform:scaleX(1.0345);">-90.00</span>
<span class="t" style="left:1127.74px;top:721px;font-size:12px;line-height:12px;color:#000;transform:scaleX(1.0345);">-90.00</span>
<div style="left:84px;top:726px;width:2px;height:1px;background:#000"></div>
<span class="t" style="left:44.64px;top:748px;font-size:12px;line-height:12px;color:#000;transform:scaleX(1.0345);">-100.0</span>
<span class="t" style="left:1127.74px;top:748px;font-size:12px;line-height:12px;color:#000;transform:scaleX(1.0345);">-100.0</span>
<div style="left:84px;top:753px;width:2px;height:1px;background:#000"></div>
<span class="t" style="left:44.63px;top:776px;font-size:12px;line-height:12px;color:#000;transform:scaleX(1.0634);">-110.0</span>
<span class="t" style="left:1127.73px;top:776px;font-size:12px;line-height:12px;color:#000;transform:scaleX(1.0634);">-110.0</span>
<div style="left:84px;top:781px;width:2px;height:1px;background:#000"></div>
<span class="t" style="left:44.64px;top:803px;font-size:12px;line-height:12px;color:#000;transform:scaleX(1.0345);">-120.0</span>
<span class="t" style="left:1127.74px;top:803px;font-size:12px;line-height:12px;color:#000;transform:scaleX(1.0345);">-120.0</span>
<div style="left:84px;top:808px;width:2px;height:1px;background:#000"></div>
<span class="t" style="left:44.64px;top:830px;font-size:12px;line-height:12px;color:#000;transform:scaleX(1.0345);">-130.0</span>
<span class="t" style="left:1127.74px;top:830px;font-size:12px;line-height:12px;color:#000;transform:scaleX(1.0345);">-130.0</span>
<div style="left:84px;top:835px;width:2px;height:1px;background:#000"></div>
<span class="t" style="left:44.64px;top:858px;font-size:12px;line-height:12px;color:#000;transform:scaleX(1.0345);">-140.0</span>
<span class="t" style="left:1127.74px;top:858px;font-size:12px;line-height:12px;color:#000;transform:scaleX(1.0345);">-140.0</span>
<div style="left:84px;top:863px;width:2px;height:1px;background:#000"></div>
<div style="left:-3.6px;top:667.9px;width:80px;height:20px;transform:rotate(-90deg);transform-origin:50% 50%;"><span class="t" style="left:14.16px;top:3px;font-size:14.1px;line-height:14.1px;color:#000;transform:scaleX(0.9544);">dBV rms</span></div>
<div style="left:1100px;top:479px;width:23px;height:398px;background:#f4f4f4;border:solid;border-width:2px 1px 2px 2px;border-color:#a0a0a0 #fff #fff #a0a0a0"></div>
<div style="left:1102px;top:481px;width:20px;height:382px;background:#000"></div>
<div style="left:1104px;top:489px;width:16px;height:373px;background:#c0c0c0"></div>
<div style="left:1122px;top:481px;width:3px;height:1px;background:#000"></div>
<div style="left:1122px;top:508px;width:3px;height:1px;background:#000"></div>
<div style="left:1122px;top:535px;width:3px;height:1px;background:#000"></div>
<div style="left:1122px;top:562px;width:3px;height:1px;background:#000"></div>
<div style="left:1122px;top:590px;width:3px;height:1px;background:#000"></div>
<div style="left:1122px;top:617px;width:3px;height:1px;background:#000"></div>
<div style="left:1122px;top:644px;width:3px;height:1px;background:#000"></div>
<div style="left:1122px;top:672px;width:3px;height:1px;background:#000"></div>
<div style="left:1122px;top:699px;width:3px;height:1px;background:#000"></div>
<div style="left:1122px;top:726px;width:3px;height:1px;background:#000"></div>
<div style="left:1122px;top:753px;width:3px;height:1px;background:#000"></div>
<div style="left:1122px;top:781px;width:3px;height:1px;background:#000"></div>
<div style="left:1122px;top:808px;width:3px;height:1px;background:#000"></div>
<div style="left:1122px;top:835px;width:3px;height:1px;background:#000"></div>
<div style="left:1122px;top:863px;width:3px;height:1px;background:#000"></div>
<div style="left:1135.4px;top:479.4px;width:80px;height:20px;transform:rotate(-90deg);transform-origin:50% 50%;"><span class="t" style="left:30.97px;top:5px;font-size:12.6px;line-height:12.6px;color:#000;transform:scaleX(0.9305);">Set</span></div>
<div style="left:1153.2px;top:480.8px;width:80px;height:20px;transform:rotate(-90deg);transform-origin:50% 50%;"><span class="t" style="left:32.38px;top:5px;font-size:12.4px;line-height:12.4px;color:#000;transform:scaleX(0.9348);">On</span></div>
<div class="btn" style="left:1202px;top:481px;width:60px;height:16px;"></div>
<span class="t" style="left:1206.46px;top:483px;font-size:12px;line-height:12px;color:#000;transform:scaleX(1.0052);">Options...</span>
<div class="btn" style="left:1165px;top:502px;width:20px;height:15px;"></div>
<span class="t" style="left:1170.99px;top:503px;font-size:12px;line-height:12px;color:#000;">1</span>
<div class="chk" style="left:1187px;top:503px;width:14px;height:14px;"></div>
<span class="t" style="left:1202.88px;top:504px;font-size:12px;line-height:12px;color:#008000;transform:scaleX(0.9666);">Overlay 1</span>
<div class="btn" style="left:1165px;top:518px;width:20px;height:15px;"></div>
<span class="t" style="left:1171.17px;top:519px;font-size:12px;line-height:12px;color:#000;">2</span>
<div class="chk" style="left:1187px;top:519px;width:14px;height:14px;"></div>
<span class="t" style="left:1202.88px;top:520px;font-size:12px;line-height:12px;color:#00a8a8;transform:scaleX(0.9677);">Overlay 2</span>
<div class="btn" style="left:1165px;top:534px;width:20px;height:15px;"></div>
<span class="t" style="left:1171.17px;top:535px;font-size:12px;line-height:12px;color:#000;">3</span>
<div class="chk" style="left:1187px;top:535px;width:14px;height:14px;"></div>
<span class="t" style="left:1202.88px;top:536px;font-size:12px;line-height:12px;color:#800080;transform:scaleX(0.9654);">Overlay 3</span>
<div class="btn" style="left:1165px;top:550px;width:20px;height:15px;"></div>
<span class="t" style="left:1171.20px;top:551px;font-size:12px;line-height:12px;color:#000;">4</span>
<div class="chk" style="left:1187px;top:551px;width:14px;height:14px;"></div>
<span class="t" style="left:1202.88px;top:552px;font-size:12px;line-height:12px;color:#ff00ff;transform:scaleX(0.9620);">Overlay 4</span>
<div class="btn" style="left:1165px;top:566px;width:20px;height:15px;"></div>
<span class="t" style="left:1171.17px;top:567px;font-size:12px;line-height:12px;color:#000;">5</span>
<div class="chk" style="left:1187px;top:567px;width:14px;height:14px;"></div>
<span class="t" style="left:1202.88px;top:568px;font-size:12px;line-height:12px;color:#804000;transform:scaleX(0.9654);">Overlay 5</span>
<div class="btn" style="left:1165px;top:582px;width:20px;height:15px;"></div>
<span class="t" style="left:1171.11px;top:583px;font-size:12px;line-height:12px;color:#000;">6</span>
<div class="chk" style="left:1187px;top:583px;width:14px;height:14px;"></div>
<span class="t" style="left:1202.88px;top:584px;font-size:12px;line-height:12px;color:#ff8060;transform:scaleX(0.9654);">Overlay 6</span>
<div class="btn" style="left:1165px;top:598px;width:20px;height:15px;"></div>
<span class="t" style="left:1171.17px;top:599px;font-size:12px;line-height:12px;color:#000;">7</span>
<div class="chk" style="left:1187px;top:599px;width:14px;height:14px;"></div>
<span class="t" style="left:1202.88px;top:600px;font-size:12px;line-height:12px;color:#20f020;transform:scaleX(0.9677);">Overlay 7</span>
<div class="btn" style="left:1165px;top:614px;width:20px;height:15px;"></div>
<span class="t" style="left:1171.17px;top:615px;font-size:12px;line-height:12px;color:#000;">8</span>
<div class="chk" style="left:1187px;top:615px;width:14px;height:14px;"></div>
<span class="t" style="left:1202.88px;top:616px;font-size:12px;line-height:12px;color:#80e0e0;transform:scaleX(0.9654);">Overlay 8</span>
<div class="btn" style="left:1165px;top:630px;width:20px;height:15px;"></div>
<span class="t" style="left:1171.17px;top:631px;font-size:12px;line-height:12px;color:#000;">9</span>
<div class="chk" style="left:1187px;top:631px;width:14px;height:14px;"></div>
<span class="t" style="left:1202.88px;top:632px;font-size:12px;line-height:12px;color:#c8c820;transform:scaleX(0.9666);">Overlay 9</span>
<div class="btn" style="left:1165px;top:646px;width:20px;height:15px;"></div>
<span class="t" style="left:1167.60px;top:647px;font-size:12px;line-height:12px;color:#000;">10</span>
<div class="chk" style="left:1187px;top:647px;width:14px;height:14px;"></div>
<span class="t" style="left:1202.87px;top:648px;font-size:12px;line-height:12px;color:#ff80ff;transform:scaleX(0.9744);">Overlay 10</span>
<div class="btn" style="left:1165px;top:662px;width:20px;height:15px;"></div>
<span class="t" style="left:1168.11px;top:663px;font-size:12px;line-height:12px;color:#000;">11</span>
<div class="chk" style="left:1187px;top:663px;width:14px;height:14px;"></div>
<span class="t" style="left:1202.86px;top:664px;font-size:12px;line-height:12px;color:#808000;transform:scaleX(0.9921);">Overlay 11</span>
<div class="btn" style="left:1165px;top:678px;width:20px;height:15px;"></div>
<span class="t" style="left:1167.69px;top:679px;font-size:12px;line-height:12px;color:#000;">12</span>
<div class="chk" style="left:1187px;top:679px;width:14px;height:14px;"></div>
<span class="t" style="left:1202.87px;top:680px;font-size:12px;line-height:12px;color:#ffa040;transform:scaleX(0.9775);">Overlay 12</span>
<div class="btn" style="left:1165px;top:694px;width:20px;height:15px;"></div>
<span class="t" style="left:1166.82px;top:695px;font-size:12px;line-height:12px;color:#000;">C1</span>
<div class="chk" style="left:1187px;top:695px;width:14px;height:14px;"></div>
<span class="t" style="left:1202.77px;top:696px;font-size:12px;line-height:12px;color:#000;transform:scaleX(1.0568);">Composite 1</span>
<div class="btn" style="left:1165px;top:710px;width:20px;height:15px;"></div>
<span class="t" style="left:1166.85px;top:711px;font-size:12px;line-height:12px;color:#000;">C2</span>
<div class="chk" style="left:1187px;top:711px;width:14px;height:14px;"></div>
<span class="t" style="left:1202.77px;top:712px;font-size:12px;line-height:12px;color:#808080;transform:scaleX(1.0577);">Composite 2</span>
<div style="left:84px;top:881px;width:1010px;height:387px;background:#000;border:solid;border-width:2px 2px 2px 2px;border-color:#a0a0a0 #fff #fff #a0a0a0"></div>
<svg style="left:86px;top:883px" width="1006" height="383" viewBox="86 0 1006 383" shape-rendering="crispEdges" fill="none"><path d="M139.5 0V383M176.5 0V383M205.5 0V383M229.5 0V383M249.5 0V383M267.5 0V383M282.5 0V383M296.5 0V383M386.5 0V383M439.5 0V383M477.5 0V383M506.5 0V383M530.5 0V383M550.5 0V383M568.5 0V383M583.5 0V383M597.5 0V383M687.5 0V383M740.5 0V383M778.5 0V383M807.5 0V383M831.5 0V383M851.5 0V383M869.5 0V383M884.5 0V383M898.5 0V383M988.5 0V383M1041.5 0V383M1079.5 0V383M86 27.5H1092M86 54.5H1092M86 81.5H1092M86 109.5H1092M86 136.5H1092M86 163.5H1092M86 191.5H1092M86 218.5H1092M86 245.5H1092M86 272.5H1092M86 300.5H1092M86 327.5H1092M86 354.5H1092" stroke="#444"/><path d="M86.5 381.5H93.5V366.5H101.5V363.5H109.5V378.5H116.5V369.5H123.5V373.5H129.5V371.5H135.5V381.5H141.5V376.5H147.5V360.5H152.5V355.5H157.5V363.5H162.5V373.5H167.5V356.5H172.5V357.5H176.5V377.5H181.5V359.5H185.5V356.5H189.5V364.5H193.5V378.5H197.5V379.5H200.5V346.5H204.5V334.5H208.5V342.5H211.5V372.5H214.5V381.5H218.5V376.5H221.5V369.5H224.5V381.5H230.5V368.5H233.5V363.5H236.5V361.5H238.5V365.5H241.5V381.5H244.5V376.5H246.5V368.5H249.5V370.5H251.5V375.5H254.5V380.5H256.5V381.5H276.5V379.5H278.5V381.5H286.5V373.5H288.5V371.5H290.5V378.5H292.5V381.5H295.5V369.5H297.5V381.5H300.5V364.5H302.5V365.5H304.5V381.5H305.5V370.5H307.5V371.5H309.5V381.5H315.5V373.5H316.5V381.5H319.5V375.5H321.5V381.5H322.5V370.5H324.5V377.5H325.5V381.5H328.5V379.5H329.5V380.5H331.5V381.5H345.5V368.5H346.5V369.5H347.5V363.5H348.5V339.5H350.5V340.5H351.5V362.5H352.5V373.5H353.5V381.5H356.5V376.5H358.5V381.5H361.5V378.5H362.5V381.5H366.5V376.5H367.5V380.5H368.5V381.5H371.5V380.5H372.5V377.5H373.5V378.5H374.5V381.5H381.5V378.5H382.5V381.5H395.5V372.5H396.5V374.5H397.5V373.5H398.5V375.5H399.5V381.5H400.5V373.5H401.5V374.5H402.5V380.5H403.5V381.5H406.5V380.5H407.5V381.5H415.5V360.5H416.5V354.5H417.5V369.5H418.5V365.5H419.5V370.5H420.5V381.5H424.5V373.5H425.5V380.5H426.5V381.5H429.5V380.5H430.5V377.5H431.5V368.5H432.5V381.5H433.5V379.5H434.5V378.5H435.5V375.5H436.5V369.5H437.5V379.5H438.5V381.5H442.5V366.5H443.5V381.5H451.5V365.5H452.5V380.5H453.5V373.5H454.5V364.5H455.5V381.5H458.5V376.5H459.5V372.5H460.5V381.5H467.5V377.5H468.5V381.5H469.5V378.5H470.5V365.5H471.5V381.5H472.5V378.5H473.5V381.5H474.5V379.5H475.5V370.5H476.5V380.5H477.5V381.5H479.5V369.5H480.5V381.5H481.5V380.5H482.5V381.5H483.5V372.5H484.5V376.5H485.5V381.5H490.5V374.5H491.5V381.5H493.5V370.5H494.5V381.5H495.5V373.5H496.5V367.5H497.5V381.5H501.5V371.5H502.5V381.5H503.5V370.5H504.5V381.5H505.5V370.5H506.5V381.5H507.5V380.5H508.5V381.5H509.5V366.5H510.5V381.5H512.5V370.5H513.5V365.5H514.5V381.5H518.5V372.5H519.5V377.5H520.5V381.5H521.5V372.5H522.5V377.5H523.5V371.5H524.5V381.5H527.5V377.5H528.5V381.5H529.5V377.5H530.5V381.5H535.5V368.5H536.5V379.5H537.5V372.5H538.5V381.5H541.5V378.5H542.5V381.5H546.5V379.5H548.5V381.5H550.5V370.5H551.5V375.5H552.5V376.5H553.5V369.5H554.5V370.5H555.5V381.5H556.5V376.5H557.5V381.5H558.5V371.5H559.5V381.5H562.5V379.5H563.5V375.5H564.5V381.5H566.5V376.5H567.5V377.5H568.5V381.5H570.5V375.5H571.5V381.5H573.5V378.5H574.5V375.5H575.5V371.5H576.5V381.5H580.5V379.5H581.5V377.5H582.5V381.5H583.5V377.5H584.5V381.5H586.5V376.5H587.5V381.5H588.5V371.5H589.5V381.5H592.5V373.5H593.5V381.5H594.5V374.5H595.5V381.5H600.5V374.5H601.5V381.5H604.5V378.5H605.5V381.5H606.5V380.5H607.5V381.5H609.5V376.5H610.5V372.5H611.5V381.5H613.5V369.5H614.5V381.5H620.5V372.5H621.5V368.5H622.5V374.5H623.5V381.5H628.5V378.5H629.5V381.5H631.5V362.5H632.5V375.5H633.5V381.5H635.5V361.5H636.5V381.5H638.5V365.5H639.5V381.5H640.5V358.5H641.5V378.5H642.5V374.5H643.5V380.5H644.5V377.5H646.5V264.5H647.5V381.5H652.5V359.5H653.5V374.5H654.5V381.5H655.5V378.5H656.5V353.5H657.5V374.5H658.5V381.5H659.5V379.5H660.5V376.5H661.5V381.5H662.5V371.5H663.5V381.5H664.5V370.5H665.5V381.5H667.5V378.5H668.5V379.5H669.5V381.5H670.5V378.5H671.5V369.5H672.5V378.5H673.5V375.5H674.5V381.5H675.5V359.5H676.5V381.5H680.5V367.5H681.5V381.5H682.5V371.5H683.5V381.5H684.5V369.5H685.5V365.5H686.5V381.5H688.5V371.5H689.5V379.5H690.5V375.5H691.5V381.5H692.5V370.5H693.5V381.5H694.5V367.5H696.5V381.5H697.5V380.5H698.5V381.5H699.5V361.5H700.5V381.5H702.5V368.5H703.5V381.5H704.5V373.5H706.5V380.5H707.5V376.5H708.5V381.5H709.5V367.5H710.5V364.5H711.5V381.5H713.5V356.5H714.5V373.5H715.5V381.5H716.5V361.5H717.5V370.5H718.5V376.5H720.5V381.5H721.5V372.5H722.5V360.5H723.5V381.5H724.5V377.5H725.5V366.5H726.5V368.5H727.5V381.5H728.5V379.5H729.5V381.5H730.5V370.5H731.5V381.5H732.5V379.5H733.5V371.5H735.5V381.5H737.5V291.5H738.5V368.5H739.5V381.5H740.5V379.5H741.5V365.5H742.5V370.5H743.5V381.5H744.5V356.5H745.5V381.5H746.5V378.5H747.5V381.5H750.5V366.5H751.5V381.5H752.5V358.5H753.5V381.5H755.5V378.5H756.5V381.5H757.5V358.5H758.5V381.5H760.5V369.5H761.5V360.5H763.5V354.5H764.5V346.5H765.5V366.5H766.5V370.5H768.5V373.5H769.5V367.5H770.5V381.5H771.5V369.5H772.5V359.5H773.5V381.5H775.5V369.5H776.5V381.5H777.5V354.5H778.5V381.5H780.5V378.5H781.5V361.5H782.5V373.5H783.5V375.5H784.5V379.5H785.5V372.5H786.5V362.5H787.5V371.5H788.5V363.5H789.5V361.5H790.5V307.5H791.5V365.5H792.5V350.5H793.5V381.5H794.5V363.5H795.5V381.5H798.5V379.5H799.5V373.5H800.5V376.5H801.5V381.5H803.5V358.5H804.5V360.5H805.5V362.5H806.5V357.5H807.5V350.5H808.5V341.5H809.5V358.5H810.5V381.5H811.5V358.5H812.5V355.5H813.5V365.5H814.5V363.5H815.5V381.5H816.5V352.5H817.5V381.5H818.5V362.5H819.5V360.5H820.5V366.5H821.5V381.5H822.5V356.5H823.5V375.5H824.5V379.5H825.5V352.5H826.5V366.5H827.5V307.5H828.5V366.5H829.5V353.5H830.5V381.5H831.5V348.5H832.5V381.5H833.5V371.5H834.5V367.5H835.5V377.5H836.5V381.5H837.5V369.5H838.5V354.5H839.5V381.5H840.5V357.5H841.5V342.5H842.5V338.5H843.5V381.5H844.5V354.5H845.5V358.5H846.5V378.5H847.5V357.5H848.5V367.5H849.5V370.5H850.5V366.5H851.5V367.5H852.5V357.5H853.5V381.5H854.5V376.5H855.5V368.5H856.5V309.5H857.5V381.5H858.5V358.5H859.5V369.5H860.5V359.5H861.5V376.5H862.5V373.5H863.5V357.5H864.5V365.5H865.5V381.5H866.5V367.5H867.5V375.5H868.5V327.5H869.5V353.5H870.5V355.5H871.5V352.5H872.5V376.5H873.5V358.5H874.5V351.5H875.5V346.5H876.5V359.5H877.5V352.5H878.5V361.5H879.5V374.5H880.5V319.5H881.5V352.5H882.5V370.5H883.5V361.5H884.5V352.5H885.5V355.5H886.5V349.5H887.5V359.5H888.5V361.5H889.5V355.5H890.5V323.5H891.5V370.5H892.5V355.5H893.5V362.5H894.5V354.5H895.5V381.5H896.5V354.5H897.5V359.5H898.5V353.5H899.5V352.5H900.5V315.5H901.5V366.5H902.5V361.5H903.5V350.5H904.5V357.5H905.5V362.5H906.5V340.5H907.5V345.5H908.5V376.5H909.5V303.5H910.5V363.5H911.5V369.5H912.5V354.5H913.5V348.5H914.5V338.5H915.5V353.5H916.5V358.5H917.5V346.5H918.5V303.5H919.5V350.5H920.5V372.5H921.5V356.5H922.5V371.5H923.5V347.5H924.5V381.5H925.5V313.5H926.5V346.5H927.5V360.5H928.5V368.5H929.5V354.5H930.5V346.5H931.5V357.5H932.5V348.5H933.5V326.5H934.5V380.5H935.5V356.5H936.5V352.5H937.5V351.5H938.5V349.5H939.5V355.5H940.5V302.5H941.5V381.5H942.5V344.5H943.5V375.5H944.5V328.5H945.5V337.5H946.5V353.5H947.5V374.5H948.5V373.5H949.5V341.5H950.5V366.5H951.5V329.5H952.5V366.5H953.5V313.5H954.5V371.5H955.5V365.5H956.5V352.5H957.5V342.5H958.5V341.5H959.5V353.5H960.5V351.5H961.5V381.5H962.5V338.5H964.5V334.5H965.5V293.5H966.5V354.5H967.5V350.5H968.5V346.5H969.5V334.5H970.5V346.5H971.5V362.5H972.5V334.5H973.5V369.5H974.5V381.5H975.5V340.5H976.5V19.5H977.5V359.5H978.5V347.5H979.5V348.5H980.5V344.5H981.5V345.5H982.5V360.5H983.5V340.5H984.5V350.5H985.5V371.5H986.5V16.5H987.5V333.5H988.5V360.5H989.5V324.5H990.5V348.5H991.5V357.5H992.5V352.5H993.5V346.5H994.5V347.5H995.5V292.5H996.5V336.5H997.5V361.5H998.5V345.5H999.5V355.5H1000.5V339.5H1001.5V340.5H1002.5V371.5H1003.5V339.5H1004.5V305.5H1005.5V343.5H1006.5V356.5H1007.5V333.5H1008.5V341.5H1009.5V350.5H1010.5V329.5H1011.5V335.5H1012.5V307.5H1013.5V337.5H1014.5V325.5H1015.5V336.5H1016.5V345.5H1017.5V342.5H1018.5V348.5H1020.5V290.5H1021.5V345.5H1022.5V336.5H1023.5V356.5H1024.5V342.5H1025.5V353.5H1026.5V347.5H1027.5V295.5H1028.5V360.5H1029.5V336.5H1030.5V351.5H1031.5V348.5H1032.5V338.5H1033.5V358.5H1034.5V304.5H1035.5V340.5H1036.5V351.5H1038.5V356.5H1039.5V341.5H1040.5V355.5H1041.5V310.5H1042.5V336.5H1043.5V345.5H1044.5V338.5H1045.5V353.5H1046.5V340.5H1047.5V315.5H1048.5V340.5H1049.5V338.5H1050.5V352.5H1051.5V332.5H1052.5V348.5H1053.5V310.5H1054.5V323.5H1055.5V329.5H1056.5V319.5H1057.5V333.5H1058.5V309.5H1059.5V330.5H1060.5V334.5H1061.5V338.5H1062.5V336.5H1063.5V335.5H1064.5V323.5H1066.5V285.5H1067.5V331.5H1068.5V340.5H1069.5V325.5H1070.5V326.5H1071.5V239.5H1072.5V327.5H1074.5V326.5H1075.5V342.5H1076.5V280.5H1077.5V331.5H1078.5V340.5H1079.5V327.5H1081.5V342.5H1082.5V335.5H1083.5V323.5H1084.5V331.5H1086.5V342.5H1087.5V333.5H1088.5V332.5H1089.5V331.5H1090.5V341.5H1091.5V329.5H1091.5" stroke="#c8c8c8" stroke-width="1" stroke-linecap="square"/></svg>
<span class="t" style="left:63.14px;top:878px;font-size:12px;line-height:12px;color:#000;">0.0</span>
<span class="t" style="left:1128.82px;top:878px;font-size:12px;line-height:12px;color:#000;">0.0</span>
<div style="left:84px;top:883px;width:2px;height:1px;background:#000"></div>
<span class="t" style="left:44.64px;top:905px;font-size:12px;line-height:12px;color:#000;transform:scaleX(1.0345);">-10.00</span>
<span class="t" style="left:1127.74px;top:905px;font-size:12px;line-height:12px;color:#000;transform:scaleX(1.0345);">-10.00</span>
<div style="left:84px;top:910px;width:2px;height:1px;background:#000"></div>
<span class="t" style="left:44.64px;top:932px;font-size:12px;line-height:12px;color:#000;transform:scaleX(1.0345);">-20.00</span>
<span class="t" style="left:1127.74px;top:932px;font-size:12px;line-height:12px;color:#000;transform:scaleX(1.0345);">-20.00</span>
<div style="left:84px;top:937px;width:2px;height:1px;background:#000"></div>
<span class="t" style="left:44.64px;top:959px;font-size:12px;line-height:12px;color:#000;transform:scaleX(1.0345);">-30.00</span>
<span class="t" style="left:1127.74px;top:959px;font-size:12px;line-height:12px;color:#000;transform:scaleX(1.0345);">-30.00</span>
<div style="left:84px;top:964px;width:2px;height:1px;background:#000"></div>
<span class="t" style="left:44.64px;top:987px;font-size:12px;line-height:12px;color:#000;transform:scaleX(1.0345);">-40.00</span>
<span class="t" style="left:1127.74px;top:987px;font-size:12px;line-height:12px;color:#000;transform:scaleX(1.0345);">-40.00</span>
<div style="left:84px;top:992px;width:2px;height:1px;background:#000"></div>
<span class="t" style="left:44.64px;top:1014px;font-size:12px;line-height:12px;color:#000;transform:scaleX(1.0345);">-50.00</span>
<span class="t" style="left:1127.74px;top:1014px;font-size:12px;line-height:12px;color:#000;transform:scaleX(1.0345);">-50.00</span>
<div style="left:84px;top:1019px;width:2px;height:1px;background:#000"></div>
<span class="t" style="left:44.64px;top:1041px;font-size:12px;line-height:12px;color:#000;transform:scaleX(1.0345);">-60.00</span>
<span class="t" style="left:1127.74px;top:1041px;font-size:12px;line-height:12px;color:#000;transform:scaleX(1.0345);">-60.00</span>
<div style="left:84px;top:1046px;width:2px;height:1px;background:#000"></div>
<span class="t" style="left:44.64px;top:1069px;font-size:12px;line-height:12px;color:#000;transform:scaleX(1.0345);">-70.00</span>
<span class="t" style="left:1127.74px;top:1069px;font-size:12px;line-height:12px;color:#000;transform:scaleX(1.0345);">-70.00</span>
<div style="left:84px;top:1074px;width:2px;height:1px;background:#000"></div>
<span class="t" style="left:44.64px;top:1096px;font-size:12px;line-height:12px;color:#000;transform:scaleX(1.0345);">-80.00</span>
<span class="t" style="left:1127.74px;top:1096px;font-size:12px;line-height:12px;color:#000;transform:scaleX(1.0345);">-80.00</span>
<div style="left:84px;top:1101px;width:2px;height:1px;background:#000"></div>
<span class="t" style="left:44.64px;top:1123px;font-size:12px;line-height:12px;color:#000;transform:scaleX(1.0345);">-90.00</span>
<span class="t" style="left:1127.74px;top:1123px;font-size:12px;line-height:12px;color:#000;transform:scaleX(1.0345);">-90.00</span>
<div style="left:84px;top:1128px;width:2px;height:1px;background:#000"></div>
<span class="t" style="left:44.64px;top:1150px;font-size:12px;line-height:12px;color:#000;transform:scaleX(1.0345);">-100.0</span>
<span class="t" style="left:1127.74px;top:1150px;font-size:12px;line-height:12px;color:#000;transform:scaleX(1.0345);">-100.0</span>
<div style="left:84px;top:1155px;width:2px;height:1px;background:#000"></div>
<span class="t" style="left:44.63px;top:1178px;font-size:12px;line-height:12px;color:#000;transform:scaleX(1.0634);">-110.0</span>
<span class="t" style="left:1127.73px;top:1178px;font-size:12px;line-height:12px;color:#000;transform:scaleX(1.0634);">-110.0</span>
<div style="left:84px;top:1183px;width:2px;height:1px;background:#000"></div>
<span class="t" style="left:44.64px;top:1205px;font-size:12px;line-height:12px;color:#000;transform:scaleX(1.0345);">-120.0</span>
<span class="t" style="left:1127.74px;top:1205px;font-size:12px;line-height:12px;color:#000;transform:scaleX(1.0345);">-120.0</span>
<div style="left:84px;top:1210px;width:2px;height:1px;background:#000"></div>
<span class="t" style="left:44.64px;top:1232px;font-size:12px;line-height:12px;color:#000;transform:scaleX(1.0345);">-130.0</span>
<span class="t" style="left:1127.74px;top:1232px;font-size:12px;line-height:12px;color:#000;transform:scaleX(1.0345);">-130.0</span>
<div style="left:84px;top:1237px;width:2px;height:1px;background:#000"></div>
<span class="t" style="left:44.64px;top:1260px;font-size:12px;line-height:12px;color:#000;transform:scaleX(1.0345);">-140.0</span>
<span class="t" style="left:1127.74px;top:1260px;font-size:12px;line-height:12px;color:#000;transform:scaleX(1.0345);">-140.0</span>
<div style="left:84px;top:1265px;width:2px;height:1px;background:#000"></div>
<div style="left:-3.6px;top:1069.9px;width:80px;height:20px;transform:rotate(-90deg);transform-origin:50% 50%;"><span class="t" style="left:14.16px;top:3px;font-size:14.1px;line-height:14.1px;color:#000;transform:scaleX(0.9544);">dBV rms</span></div>
<div style="left:1100px;top:881px;width:23px;height:398px;background:#f4f4f4;border:solid;border-width:2px 1px 2px 2px;border-color:#a0a0a0 #fff #fff #a0a0a0"></div>
<div style="left:1102px;top:883px;width:20px;height:382px;background:#000"></div>
<div style="left:1104px;top:891px;width:16px;height:373px;background:#c0c0c0"></div>
<div style="left:1122px;top:883px;width:3px;height:1px;background:#000"></div>
<div style="left:1122px;top:910px;width:3px;height:1px;background:#000"></div>
<div style="left:1122px;top:937px;width:3px;height:1px;background:#000"></div>
<div style="left:1122px;top:964px;width:3px;height:1px;background:#000"></div>
<div style="left:1122px;top:992px;width:3px;height:1px;background:#000"></div>
<div style="left:1122px;top:1019px;width:3px;height:1px;background:#000"></div>
<div style="left:1122px;top:1046px;width:3px;height:1px;background:#000"></div>
<div style="left:1122px;top:1074px;width:3px;height:1px;background:#000"></div>
<div style="left:1122px;top:1101px;width:3px;height:1px;background:#000"></div>
<div style="left:1122px;top:1128px;width:3px;height:1px;background:#000"></div>
<div style="left:1122px;top:1155px;width:3px;height:1px;background:#000"></div>
<div style="left:1122px;top:1183px;width:3px;height:1px;background:#000"></div>
<div style="left:1122px;top:1210px;width:3px;height:1px;background:#000"></div>
<div style="left:1122px;top:1237px;width:3px;height:1px;background:#000"></div>
<div style="left:1122px;top:1265px;width:3px;height:1px;background:#000"></div>
<div style="left:1135.4px;top:881.4px;width:80px;height:20px;transform:rotate(-90deg);transform-origin:50% 50%;"><span class="t" style="left:30.97px;top:5px;font-size:12.6px;line-height:12.6px;color:#000;transform:scaleX(0.9305);">Set</span></div>
<div style="left:1153.2px;top:882.8px;width:80px;height:20px;transform:rotate(-90deg);transform-origin:50% 50%;"><span class="t" style="left:32.38px;top:5px;font-size:12.4px;line-height:12.4px;color:#000;transform:scaleX(0.9348);">On</span></div>
<div class="btn" style="left:1202px;top:883px;width:60px;height:16px;"></div>
<span class="t" style="left:1206.46px;top:885px;font-size:12px;line-height:12px;color:#000;transform:scaleX(1.0052);">Options...</span>
<div class="btn" style="left:1165px;top:904px;width:20px;height:15px;"></div>
<span class="t" style="left:1170.99px;top:905px;font-size:12px;line-height:12px;color:#000;">1</span>
<div class="chk" style="left:1187px;top:905px;width:14px;height:14px;"></div>
<span class="t" style="left:1202.88px;top:906px;font-size:12px;line-height:12px;color:#008000;transform:scaleX(0.9666);">Overlay 1</span>
<div class="btn" style="left:1165px;top:920px;width:20px;height:15px;"></div>
<span class="t" style="left:1171.17px;top:921px;font-size:12px;line-height:12px;color:#000;">2</span>
<div class="chk" style="left:1187px;top:921px;width:14px;height:14px;"></div>
<span class="t" style="left:1202.88px;top:922px;font-size:12px;line-height:12px;color:#00a8a8;transform:scaleX(0.9677);">Overlay 2</span>
<div class="btn" style="left:1165px;top:936px;width:20px;height:15px;"></div>
<span class="t" style="left:1171.17px;top:937px;font-size:12px;line-height:12px;color:#000;">3</span>
<div class="chk" style="left:1187px;top:937px;width:14px;height:14px;"></div>
<span class="t" style="left:1202.88px;top:938px;font-size:12px;line-height:12px;color:#800080;transform:scaleX(0.9654);">Overlay 3</span>
<div class="btn" style="left:1165px;top:952px;width:20px;height:15px;"></div>
<span class="t" style="left:1171.20px;top:953px;font-size:12px;line-height:12px;color:#000;">4</span>
<div class="chk" style="left:1187px;top:953px;width:14px;height:14px;"></div>
<span class="t" style="left:1202.88px;top:954px;font-size:12px;line-height:12px;color:#ff00ff;transform:scaleX(0.9620);">Overlay 4</span>
<div class="btn" style="left:1165px;top:968px;width:20px;height:15px;"></div>
<span class="t" style="left:1171.17px;top:969px;font-size:12px;line-height:12px;color:#000;">5</span>
<div class="chk" style="left:1187px;top:969px;width:14px;height:14px;"></div>
<span class="t" style="left:1202.88px;top:970px;font-size:12px;line-height:12px;color:#804000;transform:scaleX(0.9654);">Overlay 5</span>
<div class="btn" style="left:1165px;top:984px;width:20px;height:15px;"></div>
<span class="t" style="left:1171.11px;top:985px;font-size:12px;line-height:12px;color:#000;">6</span>
<div class="chk" style="left:1187px;top:985px;width:14px;height:14px;"></div>
<span class="t" style="left:1202.88px;top:986px;font-size:12px;line-height:12px;color:#ff8060;transform:scaleX(0.9654);">Overlay 6</span>
<div class="btn" style="left:1165px;top:1000px;width:20px;height:15px;"></div>
<span class="t" style="left:1171.17px;top:1001px;font-size:12px;line-height:12px;color:#000;">7</span>
<div class="chk" style="left:1187px;top:1001px;width:14px;height:14px;"></div>
<span class="t" style="left:1202.88px;top:1002px;font-size:12px;line-height:12px;color:#20f020;transform:scaleX(0.9677);">Overlay 7</span>
<div class="btn" style="left:1165px;top:1016px;width:20px;height:15px;"></div>
<span class="t" style="left:1171.17px;top:1017px;font-size:12px;line-height:12px;color:#000;">8</span>
<div class="chk" style="left:1187px;top:1017px;width:14px;height:14px;"></div>
<span class="t" style="left:1202.88px;top:1018px;font-size:12px;line-height:12px;color:#80e0e0;transform:scaleX(0.9654);">Overlay 8</span>
<div class="btn" style="left:1165px;top:1032px;width:20px;height:15px;"></div>
<span class="t" style="left:1171.17px;top:1033px;font-size:12px;line-height:12px;color:#000;">9</span>
<div class="chk" style="left:1187px;top:1033px;width:14px;height:14px;"></div>
<span class="t" style="left:1202.88px;top:1034px;font-size:12px;line-height:12px;color:#c8c820;transform:scaleX(0.9666);">Overlay 9</span>
<div class="btn" style="left:1165px;top:1048px;width:20px;height:15px;"></div>
<span class="t" style="left:1167.60px;top:1049px;font-size:12px;line-height:12px;color:#000;">10</span>
<div class="chk" style="left:1187px;top:1049px;width:14px;height:14px;"></div>
<span class="t" style="left:1202.87px;top:1050px;font-size:12px;line-height:12px;color:#ff80ff;transform:scaleX(0.9744);">Overlay 10</span>
<div class="btn" style="left:1165px;top:1064px;width:20px;height:15px;"></div>
<span class="t" style="left:1168.11px;top:1065px;font-size:12px;line-height:12px;color:#000;">11</span>
<div class="chk" style="left:1187px;top:1065px;width:14px;height:14px;"></div>
<span class="t" style="left:1202.86px;top:1066px;font-size:12px;line-height:12px;color:#808000;transform:scaleX(0.9921);">Overlay 11</span>
<div class="btn" style="left:1165px;top:1080px;width:20px;height:15px;"></div>
<span class="t" style="left:1167.69px;top:1081px;font-size:12px;line-height:12px;color:#000;">12</span>
<div class="chk" style="left:1187px;top:1081px;width:14px;height:14px;"></div>
<span class="t" style="left:1202.87px;top:1082px;font-size:12px;line-height:12px;color:#ffa040;transform:scaleX(0.9775);">Overlay 12</span>
<div class="btn" style="left:1165px;top:1096px;width:20px;height:15px;"></div>
<span class="t" style="left:1166.82px;top:1097px;font-size:12px;line-height:12px;color:#000;">C1</span>
<div class="chk" style="left:1187px;top:1097px;width:14px;height:14px;"></div>
<span class="t" style="left:1202.77px;top:1098px;font-size:12px;line-height:12px;color:#000;transform:scaleX(1.0568);">Composite 1</span>
<div class="btn" style="left:1165px;top:1112px;width:20px;height:15px;"></div>
<span class="t" style="left:1166.85px;top:1113px;font-size:12px;line-height:12px;color:#000;">C2</span>
<div class="chk" style="left:1187px;top:1113px;width:14px;height:14px;"></div>
<span class="t" style="left:1202.77px;top:1114px;font-size:12px;line-height:12px;color:#808080;transform:scaleX(1.0577);">Composite 2</span>
<span class="t" style="left:578.26px;top:465px;font-size:12px;line-height:12px;color:#000;">Left</span>
<span class="t" style="left:574.07px;top:867px;font-size:12px;line-height:12px;color:#000;">Right</span>
<span class="t" style="left:1196.97px;top:466px;font-size:12px;line-height:12px;color:#000;transform:scaleX(0.9810);text-decoration:underline;text-underline-offset:1px;">Overlays</span>
<div style="left:86px;top:1265px;width:1006px;height:12px;background:repeating-conic-gradient(#fff 0% 25%, #f0f0f0 0% 50%) 0 0/2px 2px"></div>
<div style="left:86px;top:1277px;width:1006px;height:1px;background:#fff"></div>
<div class="btn" style="left:85px;top:1265px;width:21px;height:12px;"></div>
<div class="btn" style="left:1071px;top:1265px;width:21px;height:12px;"></div>
<svg style="left:92px;top:1267px" width="5" height="8" viewBox="0 0 5 8"><path d="M4.5 0.5V7.5L0.5 4Z" fill="#000"/></svg>
<svg style="left:1080px;top:1267px" width="5" height="8" viewBox="0 0 5 8"><path d="M0.5 0.5V7.5L4.5 4Z" fill="#000"/></svg>
<div class="btn" style="left:1050px;top:1265px;width:21px;height:12px;"></div>
<div style="left:139px;top:1277px;width:1px;height:3px;background:#000"></div>
<div style="left:176px;top:1277px;width:1px;height:3px;background:#000"></div>
<div style="left:205px;top:1277px;width:1px;height:3px;background:#000"></div>
<div style="left:229px;top:1277px;width:1px;height:3px;background:#000"></div>
<div style="left:249px;top:1277px;width:1px;height:3px;background:#000"></div>
<div style="left:267px;top:1277px;width:1px;height:3px;background:#000"></div>
<div style="left:282px;top:1277px;width:1px;height:3px;background:#000"></div>
<div style="left:296px;top:1277px;width:1px;height:3px;background:#000"></div>
<div style="left:386px;top:1277px;width:1px;height:3px;background:#000"></div>
<div style="left:439px;top:1277px;width:1px;height:3px;background:#000"></div>
<div style="left:477px;top:1277px;width:1px;height:3px;background:#000"></div>
<div style="left:506px;top:1277px;width:1px;height:3px;background:#000"></div>
<div style="left:530px;top:1277px;width:1px;height:3px;background:#000"></div>
<div style="left:550px;top:1277px;width:1px;height:3px;background:#000"></div>
<div style="left:568px;top:1277px;width:1px;height:3px;background:#000"></div>
<div style="left:583px;top:1277px;width:1px;height:3px;background:#000"></div>
<div style="left:597px;top:1277px;width:1px;height:3px;background:#000"></div>
<div style="left:687px;top:1277px;width:1px;height:3px;background:#000"></div>
<div style="left:740px;top:1277px;width:1px;height:3px;background:#000"></div>
<div style="left:778px;top:1277px;width:1px;height:3px;background:#000"></div>
<div style="left:807px;top:1277px;width:1px;height:3px;background:#000"></div>
<div style="left:831px;top:1277px;width:1px;height:3px;background:#000"></div>
<div style="left:851px;top:1277px;width:1px;height:3px;background:#000"></div>
<div style="left:869px;top:1277px;width:1px;height:3px;background:#000"></div>
<div style="left:884px;top:1277px;width:1px;height:3px;background:#000"></div>
<div style="left:898px;top:1277px;width:1px;height:3px;background:#000"></div>
<div style="left:988px;top:1277px;width:1px;height:3px;background:#000"></div>
<div style="left:1041px;top:1277px;width:1px;height:3px;background:#000"></div>
<div style="left:1079px;top:1277px;width:1px;height:3px;background:#000"></div>
<div style="left:86px;top:1277px;width:1px;height:3px;background:#000"></div>
<span class="t" style="left:79.80px;top:1282px;font-size:12px;line-height:12px;color:#000;">20</span>
<span class="t" style="left:132.85px;top:1282px;font-size:12px;line-height:12px;color:#000;">30</span>
<span class="t" style="left:199.60px;top:1282px;font-size:12px;line-height:12px;color:#000;">50</span>
<span class="t" style="left:243.51px;top:1282px;font-size:12px;line-height:12px;color:#000;">70</span>
<span class="t" style="left:286.64px;top:1282px;font-size:12px;line-height:12px;color:#000;">100</span>
<span class="t" style="left:377.37px;top:1282px;font-size:12px;line-height:12px;color:#000;">200</span>
<span class="t" style="left:430.42px;top:1282px;font-size:12px;line-height:12px;color:#000;">300</span>
<span class="t" style="left:497.17px;top:1282px;font-size:12px;line-height:12px;color:#000;">500</span>
<span class="t" style="left:541.08px;top:1282px;font-size:12px;line-height:12px;color:#000;">700</span>
<span class="t" style="left:585.98px;top:1282px;font-size:12px;line-height:12px;color:#000;">1.0k</span>
<span class="t" style="left:676.71px;top:1282px;font-size:12px;line-height:12px;color:#000;">2.0k</span>
<span class="t" style="left:729.76px;top:1282px;font-size:12px;line-height:12px;color:#000;">3.0k</span>
<span class="t" style="left:796.51px;top:1282px;font-size:12px;line-height:12px;color:#000;">5.0k</span>
<span class="t" style="left:840.42px;top:1282px;font-size:12px;line-height:12px;color:#000;">7.0k</span>
<span class="t" style="left:883.55px;top:1282px;font-size:12px;line-height:12px;color:#000;">10.0k</span>
<span class="t" style="left:974.28px;top:1282px;font-size:12px;line-height:12px;color:#000;">20.0k</span>
<span class="t" style="left:1027.33px;top:1282px;font-size:12px;line-height:12px;color:#000;">30.0k</span>
<span class="t" style="left:1065.04px;top:1282px;font-size:12px;line-height:12px;color:#000;">40.0k</span>
<span class="t" style="left:609.53px;top:1294px;font-size:12px;line-height:12px;color:#000;transform:scaleX(1.0123);">Frequency (Hz)</span>
<span class="t" style="left:1101.17px;top:1282px;font-size:12px;line-height:12px;color:#000;transform:scaleX(1.0736);">Pwr</span>
<span class="t" style="left:1062.71px;top:482px;font-size:24.5px;line-height:24.5px;color:#8c8c8c;font-family:'Liberation Serif',serif;font-style:italic;transform:scaleX(1.2030);">S</span>
<span class="t" style="left:1074.77px;top:489px;font-size:15px;line-height:15px;color:#8c8c8c;font-family:'Liberation Serif',serif;font-style:italic;transform:scaleX(1.2903);">+</span>
</body></html>
